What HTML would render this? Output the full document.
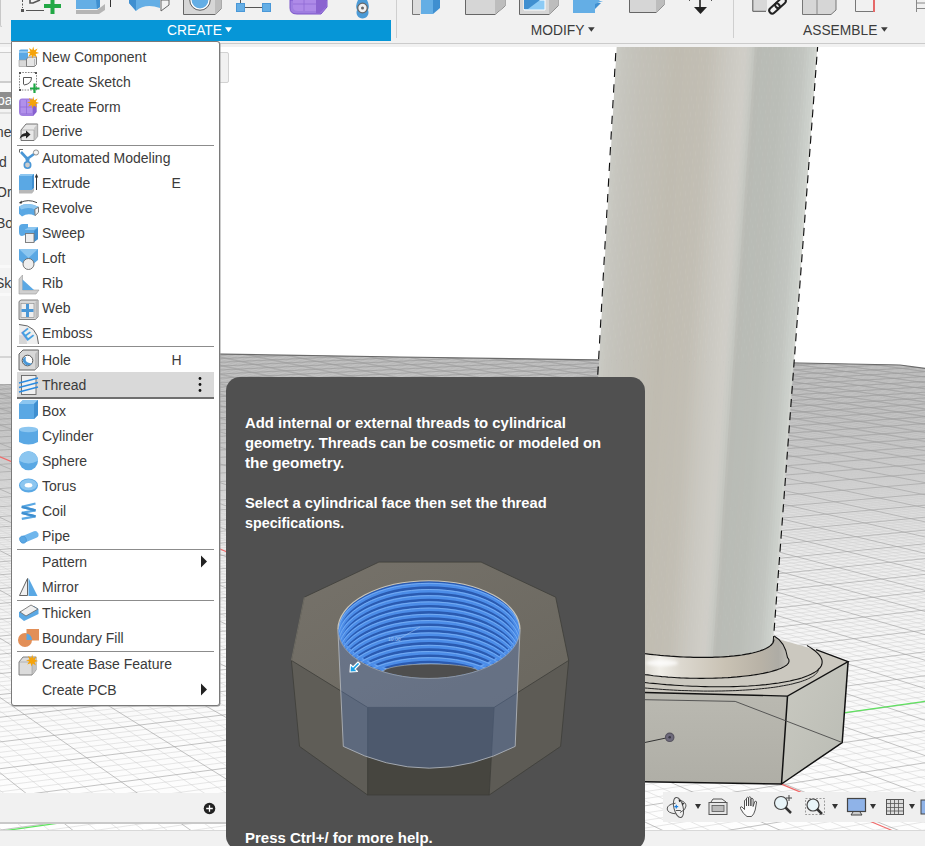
<!DOCTYPE html>
<html><head><meta charset="utf-8">
<style>
*{margin:0;padding:0;box-sizing:border-box}
html,body{width:925px;height:846px;overflow:hidden;background:#fff;font-family:"Liberation Sans",sans-serif}
.abs{position:absolute}
.tlabel{position:absolute;font-size:13.6px;color:#3c3c3c;line-height:16px;white-space:nowrap}
.mi{position:absolute;left:42px;font-size:14px;color:#3b3b3b;line-height:16px;white-space:nowrap}
.sep{position:absolute;left:17px;width:197px;height:1px;background:#8c8c8c}
.tt{position:absolute;left:245px;font-size:14.9px;font-weight:bold;color:#fff;line-height:20px;white-space:nowrap}
</style></head><body>
<svg class="abs" style="left:0;top:0" width="925" height="846" viewBox="0 0 925 846">
 <defs>
  <filter id="blur1" x="-50%" y="-200%" width="200%" height="500%"><feGaussianBlur stdDeviation="1.5"/></filter>
  <clipPath id="gclip"><polygon points="0,350.5 400,357 800,363 900,365 925,368.4 925,846 0,846"/></clipPath>
  <linearGradient id="hz" gradientUnits="userSpaceOnUse" x1="0" y1="350" x2="0" y2="846" gradientTransform="skewY(0.95)">
   <stop offset="0" stop-color="#959595"/>
   <stop offset="0.03" stop-color="#a2a2a2"/>
   <stop offset="0.1" stop-color="#aeaeae"/>
   <stop offset="0.2" stop-color="#c8c8c8"/>
   <stop offset="0.3" stop-color="#dedede"/>
   <stop offset="0.4" stop-color="#ededed"/>
   <stop offset="0.6" stop-color="#f8f8f8"/>
   <stop offset="1" stop-color="#ffffff"/>
  </linearGradient>
  <linearGradient id="filg" gradientUnits="userSpaceOnUse" x1="645" y1="0" x2="790" y2="0">
   <stop offset="0" stop-color="#dcd9d1"/>
   <stop offset="0.1" stop-color="#f0eee8"/>
   <stop offset="0.25" stop-color="#dcd8cf"/>
   <stop offset="0.55" stop-color="#c9c2b4"/>
   <stop offset="0.8" stop-color="#b8b2a6"/>
   <stop offset="0.92" stop-color="#aeaca5"/>
   <stop offset="1" stop-color="#c4c2bb"/>
  </linearGradient>
  <linearGradient id="frontg" x1="0" y1="0" x2="0" y2="1">
   <stop offset="0" stop-color="#bab9b1"/><stop offset="1" stop-color="#afaea6"/>
  </linearGradient>
  <linearGradient id="rightg" x1="0" y1="0" x2="1" y2="1">
   <stop offset="0" stop-color="#c9c9c1"/><stop offset="0.6" stop-color="#c0c1b9"/><stop offset="1" stop-color="#b9bbb4"/>
  </linearGradient>
 </defs>
 <rect x="0" y="0" width="925" height="846" fill="#fff"/>
 <g clip-path="url(#gclip)">
  <rect x="0" y="340" width="925" height="506" fill="url(#hz)"/>
  <path d="M1020.3 240.3L-949.3 291.1M1022.6 240.4L-949.6 291.4M1024.9 240.6L-949.9 291.7M1027.2 240.7L-950.1 292.0M1031.7 240.9L-950.7 292.6M1034.0 241.1L-951.0 292.9M1036.3 241.2L-951.2 293.2M1038.6 241.3L-951.5 293.5M1043.3 241.6L-952.1 294.0M1045.6 241.7L-952.4 294.3M1047.9 241.9L-952.6 294.6M1050.3 242.0L-952.9 294.9M1055.0 242.3L-953.5 295.5M1057.3 242.4L-953.8 295.8M1059.7 242.5L-954.1 296.1M1062.1 242.7L-954.4 296.4M1066.8 242.9L-954.9 297.1M1069.2 243.1L-955.2 297.4M1071.6 243.2L-955.5 297.7M1074.0 243.3L-955.8 298.0M1078.8 243.6L-956.4 298.6M1081.2 243.7L-956.7 298.9M1083.6 243.9L-957.0 299.2M1086.1 244.0L-957.3 299.6M1091.0 244.3L-957.9 300.2M1093.4 244.4L-958.2 300.5M1095.9 244.6L-958.5 300.8M1098.3 244.7L-958.8 301.2M1103.3 245.0L-959.4 301.8M1105.7 245.1L-959.7 302.1M1108.2 245.2L-960.1 302.5M1110.7 245.4L-960.4 302.8M1115.7 245.7L-961.0 303.5M1118.2 245.8L-961.3 303.8M1120.8 246.0L-961.6 304.1M1123.3 246.1L-961.9 304.5M1128.4 246.4L-962.6 305.1M1130.9 246.5L-962.9 305.5M1133.5 246.7L-963.2 305.8M1136.0 246.8L-963.6 306.2M1141.2 247.1L-964.2 306.9M1143.7 247.2L-964.5 307.2M1146.3 247.4L-964.9 307.5M1148.9 247.5L-965.2 307.9M1154.1 247.8L-965.9 308.6M1156.7 248.0L-966.2 309.0M1159.4 248.1L-966.5 309.3M1162.0 248.3L-966.9 309.7M1167.3 248.6L-967.6 310.4M1169.9 248.7L-967.9 310.8M1172.6 248.9L-968.2 311.1M1175.2 249.0L-968.6 311.5M1180.6 249.3L-969.3 312.2M1183.3 249.5L-969.6 312.6M1186.0 249.6L-970.0 313.0M1188.7 249.8L-970.3 313.3M1194.1 250.1L-971.1 314.1M1196.8 250.2L-971.4 314.5M1199.5 250.4L-971.8 314.8M1202.3 250.5L-972.1 315.2M1207.8 250.8L-972.9 316.0M1210.5 251.0L-973.2 316.4M1213.3 251.2L-973.6 316.8M1216.1 251.3L-974.0 317.1M1221.7 251.6L-974.7 317.9M1224.5 251.8L-975.1 318.3M1227.3 251.9L-975.4 318.7M1230.1 252.1L-975.8 319.1M1235.7 252.4L-976.6 319.9M1238.6 252.6L-977.0 320.3M1241.4 252.7L-977.3 320.7M1244.3 252.9L-977.7 321.1M1250.0 253.2L-978.5 321.9M1252.9 253.4L-978.9 322.4M1255.8 253.5L-979.3 322.8M1258.6 253.7L-979.7 323.2M1264.5 254.0L-980.5 324.0M1267.4 254.2L-980.9 324.4M1270.3 254.4L-981.3 324.9M1273.2 254.5L-981.7 325.3M1279.1 254.9L-982.5 326.2M1282.1 255.0L-982.9 326.6M1285.1 255.2L-983.3 327.0M1288.0 255.4L-983.7 327.4M1294.0 255.7L-984.5 328.3M1297.0 255.9L-985.0 328.8M1300.0 256.0L-985.4 329.2M1303.0 256.2L-985.8 329.7M1309.1 256.5L-986.7 330.6M1312.1 256.7L-987.1 331.0M1315.2 256.9L-987.5 331.5M1318.3 257.1L-987.9 331.9M1324.4 257.4L-988.8 332.8M1327.5 257.6L-989.3 333.3M1330.6 257.8L-989.7 333.8M1333.7 257.9L-990.1 334.2M1340.0 258.3L-991.0 335.2M1343.1 258.5L-991.5 335.6M1346.2 258.6L-991.9 336.1M1349.4 258.8L-992.4 336.6M1355.7 259.2L-993.3 337.6M1358.9 259.3L-993.7 338.0M1362.1 259.5L-994.2 338.5M1365.3 259.7L-994.7 339.0M1371.7 260.1L-995.6 340.0M1374.9 260.3L-996.1 340.5M1378.2 260.4L-996.5 341.0M1381.4 260.6L-997.0 341.5M1388.0 261.0L-998.0 342.5M1391.2 261.2L-998.5 343.0M1394.5 261.4L-998.9 343.5M1397.8 261.5L-999.4 344.0M1404.4 261.9L-1000.4 345.1M1407.8 262.1L-1000.9 345.6M1411.1 262.3L-1001.4 346.1M1414.5 262.5L-1001.9 346.7M1421.2 262.9L-1002.9 347.7M1424.6 263.0L-1003.4 348.2M1427.9 263.2L-1003.9 348.8M1431.3 263.4L-1004.4 349.3M1438.2 263.8L-1005.5 350.4M1441.6 264.0L-1006.0 351.0M1445.0 264.2L-1006.5 351.5M1448.5 264.4L-1007.0 352.1M1455.4 264.8L-1008.1 353.2M1458.9 265.0L-1008.6 353.8M1462.4 265.2L-1009.2 354.3M1465.9 265.4L-1009.7 354.9M1472.9 265.8L-1010.8 356.0M1476.5 266.0L-1011.3 356.6M1480.0 266.2L-1011.9 357.2M1483.6 266.4L-1012.5 357.8M1490.7 266.8L-1013.6 359.0M1494.3 267.0L-1014.1 359.6M1497.9 267.2L-1014.7 360.2M1501.5 267.4L-1015.3 360.8M1508.8 267.8L-1016.4 362.0M1512.4 268.0L-1017.0 362.6M1516.1 268.2L-1017.6 363.2M1519.8 268.4L-1018.2 363.8M1527.1 268.8L-1019.3 365.1M1530.9 269.0L-1019.9 365.7M1534.6 269.2L-1020.5 366.3M1538.3 269.4L-1021.1 367.0M1545.8 269.9L-1022.3 368.2M1549.6 270.1L-1023.0 368.9M1553.3 270.3L-1023.6 369.5M1557.1 270.5L-1024.2 370.2M1564.8 270.9L-1025.4 371.5M1568.6 271.1L-1026.1 372.2M1572.4 271.4L-1026.7 372.8M1576.3 271.6L-1027.3 373.5M1584.0 272.0L-1028.6 374.9M1587.9 272.2L-1029.3 375.5M1591.8 272.4L-1029.9 376.2M1595.7 272.7L-1030.6 376.9M1603.6 273.1L-1031.9 378.3M1607.5 273.3L-1032.6 379.0M1611.5 273.6L-1033.2 379.7M1615.5 273.8L-1033.9 380.4M1623.5 274.2L-1035.3 381.9M1627.5 274.5L-1035.9 382.6M1631.5 274.7L-1036.6 383.3M1635.6 274.9L-1037.3 384.0M1643.7 275.4L-1038.7 385.5M1647.8 275.6L-1039.4 386.3M1651.9 275.8L-1040.1 387.0M1656.0 276.1L-1040.9 387.8M1664.3 276.5L-1042.3 389.3M1668.4 276.8L-1043.0 390.1M1672.6 277.0L-1043.8 390.8M1676.8 277.2L-1044.5 391.6M1685.2 277.7L-1046.0 393.2M1689.4 277.9L-1046.7 394.0M1693.7 278.2L-1047.5 394.8M1697.9 278.4L-1048.3 395.6M1706.5 278.9L-1049.8 397.2M1710.8 279.1L-1050.6 398.0M1715.1 279.4L-1051.3 398.8M1719.4 279.6L-1052.1 399.7M1728.1 280.1L-1053.7 401.3M1732.5 280.4L-1054.5 402.2M1736.9 280.6L-1055.3 403.0M1741.3 280.9L-1056.1 403.9M1750.2 281.4L-1057.8 405.6M1754.6 281.6L-1058.6 406.5M1759.1 281.9L-1059.4 407.4M1763.6 282.1L-1060.3 408.3M1772.6 282.6L-1061.9 410.0M1777.1 282.9L-1062.8 410.9M1781.6 283.1L-1063.7 411.9M1786.2 283.4L-1064.5 412.8M1795.4 283.9L-1066.3 414.6M1800.0 284.2L-1067.2 415.5M1804.6 284.4L-1068.0 416.5M1809.2 284.7L-1068.9 417.4M1818.6 285.2L-1070.7 419.3M1823.3 285.5L-1071.7 420.3M1828.0 285.7L-1072.6 421.3M1832.7 286.0L-1073.5 422.2M1842.2 286.5L-1075.4 424.2M1847.0 286.8L-1076.3 425.2M1851.8 287.1L-1077.3 426.2M1856.6 287.3L-1078.2 427.2M1866.3 287.9L-1080.2 429.3M1871.1 288.2L-1081.1 430.3M1876.0 288.4L-1082.1 431.3M1880.9 288.7L-1083.1 432.4M1890.8 289.3L-1085.1 434.5M1895.7 289.5L-1086.1 435.6M1900.7 289.8L-1087.2 436.7M1905.7 290.1L-1088.2 437.7M1915.7 290.7L-1090.3 439.9M1920.8 290.9L-1091.3 441.1M1925.8 291.2L-1092.4 442.2M1930.9 291.5L-1093.4 443.3M1941.2 292.1L-1095.6 445.6M1946.3 292.4L-1096.7 446.7M1951.5 292.7L-1097.8 447.9M1956.6 293.0L-1098.9 449.1M1967.1 293.6L-1101.1 451.4M1972.3 293.8L-1102.3 452.6M1977.5 294.1L-1103.4 453.8M1982.8 294.4L-1104.6 455.0M1993.4 295.0L-1106.9 457.5M1998.8 295.3L-1108.1 458.7M2004.1 295.6L-1109.3 460.0M2009.5 295.9L-1110.4 461.3M2020.3 296.5L-1112.9 463.8M2025.8 296.9L-1114.1 465.1M2031.3 297.2L-1115.3 466.4M2036.7 297.5L-1116.6 467.7M2047.8 298.1L-1119.1 470.4M2053.3 298.4L-1120.4 471.7M2058.9 298.7L-1121.6 473.1M2064.5 299.0L-1122.9 474.4M2075.7 299.7L-1125.6 477.2M2081.4 300.0L-1126.9 478.6M2087.1 300.3L-1128.2 480.0M2092.8 300.6L-1129.6 481.5M2104.3 301.3L-1132.3 484.3M2110.0 301.6L-1133.7 485.8M2115.8 301.9L-1135.1 487.3M2121.6 302.2L-1136.5 488.8M2133.3 302.9L-1139.4 491.8M2139.2 303.2L-1140.8 493.3M2145.1 303.6L-1142.3 494.8M2151.1 303.9L-1143.7 496.4M2163.0 304.6L-1146.7 499.5M2169.0 304.9L-1148.2 501.1M2175.1 305.3L-1149.7 502.7M2181.1 305.6L-1151.3 504.3M2193.3 306.3L-1154.4 507.6M2199.4 306.6L-1156.0 509.3M2205.6 307.0L-1157.5 511.0M2211.8 307.3L-1159.1 512.7M2224.2 308.0L-1162.4 516.1M2230.5 308.4L-1164.1 517.8M2236.7 308.7L-1165.7 519.6M2243.1 309.1L-1167.4 521.4M2255.7 309.8L-1170.8 525.0M2262.1 310.1L-1172.5 526.8M2268.6 310.5L-1174.3 528.6M2275.0 310.9L-1176.0 530.5M2288.0 311.6L-1179.6 534.3M2294.5 312.0L-1181.4 536.2M2301.0 312.3L-1183.3 538.1M2307.6 312.7L-1185.1 540.1M2320.9 313.5L-1188.8 544.0M2327.5 313.8L-1190.8 546.0M2334.2 314.2L-1192.7 548.1M2340.9 314.6L-1194.6 550.1M2354.5 315.3L-1198.6 554.3M2361.3 315.7L-1200.6 556.4M2368.1 316.1L-1202.6 558.5M2375.0 316.5L-1204.6 560.7M2388.8 317.3L-1208.8 565.1M2395.8 317.7L-1210.9 567.3M2402.7 318.1L-1213.0 569.5M2409.8 318.5L-1215.1 571.8M2423.9 319.2L-1219.5 576.4M2431.0 319.6L-1221.7 578.8M2438.1 320.0L-1224.0 581.1M2445.3 320.5L-1226.2 583.5M2459.8 321.3L-1230.9 588.4M2467.0 321.7L-1233.2 590.9M2474.3 322.1L-1235.6 593.4M2481.7 322.5L-1238.0 595.9M2496.4 323.3L-1242.8 601.0M2503.9 323.7L-1245.3 603.6M2511.3 324.2L-1247.8 606.3M2518.9 324.6L-1250.3 609.0M2534.0 325.4L-1255.5 614.4M2541.6 325.9L-1258.1 617.2M2549.2 326.3L-1260.8 620.0M2556.9 326.7L-1263.4 622.8M2572.3 327.6L-1268.9 628.6M2580.1 328.0L-1271.7 631.5M2587.9 328.5L-1274.5 634.5M2595.8 328.9L-1277.3 637.5M2611.6 329.8L-1283.1 643.6M2619.6 330.3L-1286.1 646.7M2627.6 330.7L-1289.1 649.9M2635.6 331.2L-1292.1 653.1M2651.8 332.1L-1298.3 659.6M2659.9 332.5L-1301.4 662.9M2668.1 333.0L-1304.6 666.3M2676.4 333.4L-1307.8 669.7M2692.9 334.4L-1314.4 676.6M2701.3 334.8L-1317.8 680.1M2709.7 335.3L-1321.2 683.7M2718.1 335.8L-1324.6 687.4M2735.1 336.7L-1331.6 694.8M2743.6 337.2L-1335.2 698.6M2752.2 337.7L-1338.8 702.4M2760.9 338.2L-1342.5 706.3M2778.2 339.2L-1350.0 714.2M2787.0 339.7L-1353.9 718.3M2795.8 340.2L-1357.8 722.4M2804.7 340.7L-1361.7 726.5M2822.5 341.7L-1369.8 735.1M2831.5 342.2L-1373.9 739.4M2840.5 342.7L-1378.1 743.8M2849.5 343.2L-1382.3 748.3M2867.8 344.2L-1391.0 757.5M2877.0 344.7L-1395.5 762.2M2886.3 345.3L-1400.0 766.9M2895.6 345.8L-1404.5 771.8M2914.3 346.8L-1413.9 781.6M2923.7 347.4L-1418.7 786.7M2933.2 347.9L-1423.6 791.8M2942.8 348.4L-1428.5 797.1M2962.0 349.5L-1438.6 807.8M2971.7 350.1L-1443.8 813.2M2981.4 350.6L-1449.1 818.8M2991.2 351.2L-1454.5 824.5M3010.9 352.3L-1465.5 836.1M3020.8 352.8L-1471.1 842.1M3030.8 353.4L-1476.9 848.1M3040.9 353.9L-1482.7 854.3M3061.1 355.1L-1494.7 866.9M3071.3 355.7L-1500.8 873.4M3081.6 356.2L-1507.1 880.0M3091.9 356.8L-1513.5 886.8M3112.7 358.0L-1526.6 900.6M3123.1 358.6L-1533.3 907.7M3133.7 359.2L-1540.2 915.0M3144.2 359.8L-1547.2 922.4M3165.6 361.0L-1561.6 937.6M3176.4 361.6L-1569.0 945.4M3187.2 362.2L-1576.5 953.3M3198.0 362.8L-1584.2 961.5M3220.0 364.0L-1600.1 978.3M3231.0 364.6L-1608.3 986.9M3242.2 365.3L-1616.7 995.7M3253.3 365.9L-1625.2 1004.7M3275.9 367.2L-1642.8 1023.3M3287.3 367.8L-1651.9 1032.9M3298.7 368.4L-1661.2 1042.7M3310.2 369.1L-1670.7 1052.8M3333.4 370.4L-1690.3 1073.5M3345.0 371.1L-1700.5 1084.2M3356.8 371.7L-1710.9 1095.2M3368.6 372.4L-1721.5 1106.4M3392.5 373.7L-1743.5 1129.7M3404.5 374.4L-1755.0 1141.8M3416.6 375.1L-1766.7 1154.1M3428.8 375.8L-1778.7 1166.8M3453.3 377.1L-1803.6 1193.1M3465.7 377.8L-1816.5 1206.7M3478.1 378.5L-1829.8 1220.8M3490.7 379.2L-1843.4 1235.1M3515.9 380.7L-1871.8 1265.1M3528.7 381.4L-1886.6 1280.7M3541.5 382.1L-1901.8 1296.8M3554.4 382.8L-1917.4 1313.2M3580.4 384.3L-1950.0 1347.7M3593.6 385.0L-1967.1 1365.7M3606.8 385.8L-1984.6 1384.2M3620.1 386.5L-2002.7 1403.3M3646.9 388.0L-2040.6 1443.3M3660.4 388.8L-2060.5 1464.3M3674.0 389.6L-2081.0 1486.0M3687.7 390.3L-2102.2 1508.3M3715.4 391.9L-2146.7 1555.4M3729.3 392.7L-2170.2 1580.2M3743.4 393.5L-2194.5 1605.8M3757.5 394.3L-2219.6 1632.4M3786.0 395.9L-2272.8 1688.5M3800.4 396.7L-2300.9 1718.2M3814.9 397.5L-2330.1 1749.0M3829.4 398.3L-2360.5 1781.1M3858.9 400.0L-2425.0 1849.2M3873.7 400.8L-2459.3 1885.4M3888.7 401.6L-2495.1 1923.2M3903.7 402.5L-2532.5 1962.6M3934.1 404.2L-2612.4 2047.0M3949.4 405.0L-2655.2 2092.2M3964.9 405.9L-2700.0 2139.6M3980.4 406.8L-2747.1 2189.3M4011.8 408.6L-2848.7 2296.6M4027.6 409.4L-2903.6 2354.5M4043.6 410.3L-2961.5 2415.6M4059.6 411.2L-3022.7 2480.3M4092.1 413.1L-3156.1 2621.1M4108.4 414.0L-3229.1 2698.1M4124.9 414.9L-3306.6 2780.0M4141.5 415.9L-3389.4 2867.4M1015.7 240.2L4156.9 417.2M1013.3 240.3L4155.5 417.7M1010.9 240.4L4154.1 418.2M1008.5 240.4L4152.7 418.6M1003.7 240.5L4149.9 419.6M1001.2 240.6L4148.5 420.0M998.8 240.7L4147.1 420.5M996.4 240.7L4145.7 421.0M991.6 240.9L4142.9 421.9M989.1 240.9L4141.4 422.4M986.7 241.0L4140.0 422.9M984.3 241.0L4138.6 423.3M979.4 241.2L4135.7 424.3M977.0 241.2L4134.2 424.8M974.5 241.3L4132.8 425.3M972.1 241.4L4131.3 425.8M967.2 241.5L4128.4 426.7M964.7 241.6L4126.9 427.2M962.2 241.6L4125.4 427.7M959.8 241.7L4124.0 428.2M954.9 241.8L4121.0 429.2M952.4 241.9L4119.5 429.7M949.9 241.9L4118.0 430.2M947.4 242.0L4116.5 430.7M942.5 242.1L4113.4 431.7M940.0 242.2L4111.9 432.2M937.5 242.3L4110.4 432.7M935.0 242.3L4108.8 433.3M930.0 242.4L4105.7 434.3M927.5 242.5L4104.2 434.8M925.0 242.6L4102.6 435.3M922.5 242.6L4101.1 435.8M917.5 242.8L4097.9 436.9M914.9 242.8L4096.3 437.4M912.4 242.9L4094.8 437.9M909.9 243.0L4093.2 438.5M904.8 243.1L4090.0 439.5M902.3 243.2L4088.4 440.1M899.8 243.2L4086.7 440.6M897.2 243.3L4085.1 441.2M892.2 243.4L4081.9 442.2M889.6 243.5L4080.2 442.8M887.1 243.6L4078.6 443.3M884.5 243.6L4076.9 443.9M879.4 243.8L4073.6 445.0M876.8 243.8L4072.0 445.5M874.2 243.9L4070.3 446.1M871.7 243.9L4068.6 446.7M866.5 244.1L4065.2 447.8M863.9 244.1L4063.5 448.3M861.4 244.2L4061.8 448.9M858.8 244.3L4060.1 449.5M853.6 244.4L4056.7 450.6M851.0 244.5L4054.9 451.2M848.4 244.5L4053.2 451.8M845.8 244.6L4051.5 452.4M840.6 244.8L4048.0 453.5M838.0 244.8L4046.2 454.1M835.3 244.9L4044.4 454.7M832.7 245.0L4042.7 455.3M827.5 245.1L4039.1 456.5M824.8 245.2L4037.3 457.1M822.2 245.2L4035.5 457.7M819.6 245.3L4033.7 458.3M814.3 245.4L4030.1 459.5M811.6 245.5L4028.2 460.1M809.0 245.6L4026.4 460.7M806.3 245.6L4024.6 461.3M801.0 245.8L4020.8 462.6M798.4 245.8L4019.0 463.2M795.7 245.9L4017.1 463.8M793.0 246.0L4015.2 464.4M787.7 246.1L4011.5 465.7M785.0 246.2L4009.6 466.3M782.3 246.3L4007.7 467.0M779.6 246.3L4005.7 467.6M774.2 246.5L4001.9 468.9M771.5 246.5L4000.0 469.5M768.8 246.6L3998.0 470.2M766.1 246.7L3996.1 470.8M760.7 246.8L3992.1 472.1M758.0 246.9L3990.2 472.8M755.3 246.9L3988.2 473.5M752.6 247.0L3986.2 474.1M747.1 247.2L3982.2 475.4M744.4 247.2L3980.2 476.1M741.6 247.3L3978.1 476.8M738.9 247.4L3976.1 477.5M733.4 247.5L3972.0 478.8M730.7 247.6L3970.0 479.5M727.9 247.7L3967.9 480.2M725.2 247.7L3965.8 480.9M719.6 247.9L3961.7 482.3M716.9 247.9L3959.6 483.0M714.1 248.0L3957.5 483.7M711.3 248.1L3955.4 484.4M705.8 248.2L3951.1 485.8M703.0 248.3L3949.0 486.5M700.2 248.4L3946.8 487.2M697.4 248.4L3944.7 488.0M691.8 248.6L3940.3 489.4M689.0 248.7L3938.1 490.1M686.2 248.7L3935.9 490.9M683.4 248.8L3933.7 491.6M677.7 248.9L3929.3 493.1M674.9 249.0L3927.1 493.8M672.1 249.1L3924.8 494.6M669.3 249.2L3922.6 495.3M663.6 249.3L3918.1 496.8M660.8 249.4L3915.8 497.6M657.9 249.5L3913.5 498.3M655.1 249.5L3911.2 499.1M649.4 249.7L3906.6 500.6M646.5 249.8L3904.2 501.4M643.6 249.8L3901.9 502.2M640.8 249.9L3899.6 503.0M635.0 250.0L3894.8 504.5M632.1 250.1L3892.5 505.3M629.3 250.2L3890.1 506.1M626.4 250.3L3887.7 506.9M620.6 250.4L3882.9 508.5M617.7 250.5L3880.4 509.3M614.8 250.6L3878.0 510.2M611.9 250.6L3875.5 511.0M606.1 250.8L3870.6 512.6M603.2 250.9L3868.1 513.4M600.2 250.9L3865.6 514.3M597.3 251.0L3863.1 515.1M591.4 251.2L3858.1 516.8M588.5 251.2L3855.5 517.6M585.6 251.3L3853.0 518.5M582.6 251.4L3850.4 519.3M576.7 251.5L3845.3 521.1M573.8 251.6L3842.7 521.9M570.8 251.7L3840.1 522.8M567.8 251.8L3837.5 523.7M561.9 251.9L3832.2 525.4M558.9 252.0L3829.5 526.3M556.0 252.1L3826.9 527.2M553.0 252.2L3824.2 528.1M547.0 252.3L3818.8 529.9M544.0 252.4L3816.1 530.8M541.0 252.5L3813.3 531.7M538.0 252.5L3810.6 532.6M532.0 252.7L3805.1 534.4M529.0 252.8L3802.3 535.4M525.9 252.9L3799.5 536.3M522.9 252.9L3796.7 537.2M516.9 253.1L3791.0 539.1M513.8 253.2L3788.2 540.1M510.8 253.2L3785.3 541.0M507.7 253.3L3782.5 542.0M501.6 253.5L3776.7 543.9M498.6 253.6L3773.8 544.9M495.5 253.6L3770.8 545.9M492.4 253.7L3767.9 546.8M486.3 253.9L3762.0 548.8M483.2 254.0L3759.0 549.8M480.1 254.0L3756.0 550.8M477.1 254.1L3753.0 551.8M470.9 254.3L3746.9 553.8M467.8 254.4L3743.8 554.9M464.7 254.4L3740.8 555.9M461.6 254.5L3737.7 556.9M455.3 254.7L3731.4 559.0M452.2 254.8L3728.3 560.0M449.1 254.8L3725.2 561.1M446.0 254.9L3722.0 562.1M439.7 255.1L3715.6 564.3M436.5 255.2L3712.4 565.3M433.4 255.2L3709.2 566.4M430.3 255.3L3705.9 567.5M423.9 255.5L3699.4 569.7M420.8 255.6L3696.1 570.8M417.6 255.6L3692.8 571.9M414.4 255.7L3689.4 573.0M408.1 255.9L3682.7 575.2M404.9 256.0L3679.3 576.3M401.7 256.1L3675.9 577.5M398.5 256.1L3672.5 578.6M392.1 256.3L3665.6 580.9M388.9 256.4L3662.2 582.1M385.7 256.5L3658.7 583.2M382.5 256.6L3655.2 584.4M376.0 256.7L3648.1 586.7M372.8 256.8L3644.5 587.9M369.6 256.9L3641.0 589.1M366.3 257.0L3637.4 590.3M359.8 257.1L3630.1 592.7M356.6 257.2L3626.4 594.0M353.3 257.3L3622.8 595.2M350.1 257.4L3619.1 596.4M343.5 257.6L3611.6 598.9M340.2 257.6L3607.8 600.2M337.0 257.7L3604.1 601.4M333.7 257.8L3600.3 602.7M327.1 258.0L3592.6 605.2M323.8 258.1L3588.7 606.5M320.5 258.1L3584.9 607.8M317.2 258.2L3581.0 609.1M310.5 258.4L3573.1 611.7M307.2 258.5L3569.1 613.1M303.9 258.6L3565.1 614.4M300.6 258.7L3561.1 615.7M293.9 258.8L3553.0 618.4M290.5 258.9L3548.9 619.8M287.2 259.0L3544.8 621.2M283.8 259.1L3540.7 622.5M277.1 259.3L3532.4 625.3M273.7 259.4L3528.1 626.7M270.4 259.4L3523.9 628.1M267.0 259.5L3519.7 629.5M260.2 259.7L3511.1 632.4M256.8 259.8L3506.8 633.8M253.4 259.9L3502.4 635.3M250.0 260.0L3498.0 636.7M243.2 260.1L3489.2 639.7M239.8 260.2L3484.8 641.2M236.3 260.3L3480.3 642.7M232.9 260.4L3475.8 644.2M226.0 260.6L3466.7 647.2M222.6 260.7L3462.1 648.7M219.2 260.8L3457.5 650.2M215.7 260.8L3452.8 651.8M208.8 261.0L3443.5 654.9M205.3 261.1L3438.7 656.5M201.8 261.2L3434.0 658.1M198.4 261.3L3429.2 659.7M191.4 261.5L3419.5 662.9M187.9 261.6L3414.7 664.5M184.4 261.7L3409.8 666.1M180.9 261.7L3404.8 667.8M173.9 261.9L3394.9 671.1M170.3 262.0L3389.8 672.8M166.8 262.1L3384.8 674.5M163.3 262.2L3379.7 676.2M156.2 262.4L3369.4 679.6M152.7 262.5L3364.2 681.3M149.1 262.6L3359.0 683.1M145.6 262.7L3353.7 684.8M138.4 262.8L3343.1 688.4M134.9 262.9L3337.7 690.1M131.3 263.0L3332.3 691.9M127.7 263.1L3326.9 693.8M120.5 263.3L3315.9 697.4M116.9 263.4L3310.4 699.2M113.3 263.5L3304.8 701.1M109.7 263.6L3299.2 703.0M102.5 263.8L3287.9 706.8M98.9 263.9L3282.1 708.7M95.2 264.0L3276.4 710.6M91.6 264.0L3270.6 712.5M84.3 264.2L3258.9 716.4M80.7 264.3L3252.9 718.4M77.0 264.4L3247.0 720.4M73.3 264.5L3241.0 722.4M66.0 264.7L3228.8 726.4M62.3 264.8L3222.7 728.5M58.6 264.9L3216.5 730.5M55.0 265.0L3210.3 732.6M47.6 265.2L3197.8 736.8M43.9 265.3L3191.4 738.9M40.1 265.4L3185.0 741.0M36.4 265.5L3178.6 743.2M29.0 265.7L3165.6 747.5M25.2 265.8L3159.0 749.7M21.5 265.9L3152.4 751.9M17.8 265.9L3145.7 754.1M10.2 266.1L3132.2 758.6M6.5 266.2L3125.4 760.9M2.7 266.3L3118.5 763.2M-1.1 266.4L3111.6 765.5M-8.6 266.6L3097.6 770.1M-12.4 266.7L3090.5 772.5M-16.2 266.8L3083.4 774.9M-20.0 266.9L3076.2 777.3M-27.6 267.1L3061.7 782.1M-31.5 267.2L3054.4 784.5M-35.3 267.3L3047.0 787.0M-39.1 267.4L3039.5 789.5M-46.8 267.6L3024.4 794.5M-50.6 267.7L3016.8 797.1M-54.5 267.8L3009.1 799.6M-58.4 267.9L3001.3 802.2M-66.1 268.1L2985.7 807.4M-70.0 268.2L2977.7 810.1M-73.9 268.3L2969.7 812.7M-77.7 268.4L2961.7 815.4M-85.5 268.6L2945.3 820.9M-89.5 268.7L2937.1 823.6M-93.4 268.8L2928.8 826.4M-97.3 268.9L2920.4 829.2M-105.1 269.1L2903.4 834.8M-109.1 269.2L2894.8 837.7M-113.0 269.3L2886.1 840.6M-117.0 269.4L2877.4 843.5M-124.9 269.6L2859.7 849.4M-128.9 269.7L2850.7 852.4M-132.8 269.8L2841.7 855.4M-136.8 269.9L2832.5 858.4M-144.8 270.1L2814.1 864.6M-148.8 270.2L2804.7 867.7M-152.8 270.3L2795.3 870.9M-156.8 270.4L2785.8 874.0M-164.9 270.7L2766.5 880.4M-168.9 270.8L2756.7 883.7M-172.9 270.9L2746.9 887.0M-177.0 271.0L2737.0 890.3M-185.1 271.2L2716.8 897.0M-189.2 271.3L2706.6 900.4M-193.2 271.4L2696.3 903.8M-197.3 271.5L2685.9 907.3M-205.5 271.7L2664.9 914.3M-209.6 271.8L2654.2 917.9M-213.7 271.9L2643.4 921.4M-217.8 272.0L2632.5 925.1M-226.0 272.2L2610.5 932.4M-230.1 272.3L2599.3 936.1M-234.3 272.4L2588.0 939.9M-238.4 272.5L2576.6 943.7M-246.7 272.8L2553.5 951.4M-250.9 272.9L2541.8 955.3M-255.0 273.0L2530.0 959.2M-259.2 273.1L2518.0 963.2M-267.6 273.3L2493.7 971.3M-271.8 273.4L2481.4 975.4M-276.0 273.5L2469.0 979.6M-280.2 273.6L2456.5 983.7M-288.6 273.8L2431.0 992.2M-292.8 273.9L2418.1 996.5M-297.1 274.1L2405.0 1000.9M-301.3 274.2L2391.8 1005.3M-309.8 274.4L2365.0 1014.2M-314.1 274.5L2351.4 1018.7M-318.3 274.6L2337.6 1023.3M-322.6 274.7L2323.7 1027.9M-331.2 274.9L2295.5 1037.4M-335.5 275.0L2281.2 1042.1M-339.8 275.2L2266.7 1047.0M-344.1 275.3L2252.0 1051.8M-352.7 275.5L2222.3 1061.8M-357.1 275.6L2207.1 1066.8M-361.4 275.7L2191.8 1071.9M-365.7 275.8L2176.4 1077.0M-374.5 276.1L2144.9 1087.5M-378.8 276.2L2128.9 1092.8M-383.2 276.3L2112.8 1098.2M-387.6 276.4L2096.4 1103.7M-396.4 276.6L2063.2 1114.8M-400.8 276.7L2046.2 1120.4M-405.2 276.8L2029.1 1126.1M-409.6 277.0L2011.8 1131.9M-418.4 277.2L1976.6 1143.6M-422.9 277.3L1958.6 1149.6M-427.3 277.4L1940.5 1155.6M-431.8 277.5L1922.1 1161.7M-440.7 277.8L1884.7 1174.2M-445.2 277.9L1865.7 1180.6M-449.6 278.0L1846.4 1187.0M-454.1 278.1L1826.9 1193.5M-463.1 278.3L1787.1 1206.7M-467.6 278.5L1766.8 1213.5M-472.2 278.6L1746.3 1220.3M-476.7 278.7L1725.5 1227.2M-485.8 278.9L1683.1 1241.4M-490.3 279.0L1661.5 1248.6M-494.9 279.2L1639.6 1255.9M-499.4 279.3L1617.5 1263.2M-508.6 279.5L1572.2 1278.3M-513.2 279.6L1549.1 1286.0M-517.8 279.7L1525.7 1293.8M-522.4 279.9L1502.0 1301.7M-531.6 280.1L1453.6 1317.8M-536.2 280.2L1428.9 1326.1M-540.8 280.3L1403.8 1334.4M-545.5 280.5L1378.4 1342.9M-554.8 280.7L1326.5 1360.2M-559.5 280.8L1300.0 1369.0M-564.1 280.9L1273.1 1378.0M-568.8 281.1L1245.7 1387.1M-578.2 281.3L1189.9 1405.7M-582.9 281.4L1161.4 1415.2M-587.6 281.5L1132.4 1424.8M-592.3 281.7L1103.0 1434.6M-601.8 281.9L1042.8 1454.7M-606.5 282.0L1012.0 1465.0M-611.3 282.2L980.7 1475.4M-616.0 282.3L948.9 1486.0M-625.6 282.5L883.8 1507.7M-630.4 282.6L850.5 1518.8M-635.2 282.8L816.6 1530.0M-640.0 282.9L782.1 1541.5M-649.6 283.1L711.5 1565.0M-654.4 283.3L675.3 1577.1M-659.2 283.4L638.5 1589.4M-664.1 283.5L601.0 1601.9M-673.8 283.8L524.2 1627.5M-678.6 283.9L484.7 1640.6M-683.5 284.0L444.6 1654.0M-688.4 284.1L403.7 1667.6M-698.2 284.4L319.7 1695.6M-703.1 284.5L276.5 1710.0M-708.0 284.6L232.6 1724.6M-712.9 284.8L187.8 1739.5M-722.8 285.0L95.6 1770.2M-727.8 285.2L48.2 1786.0M-732.7 285.3L-0.2 1802.1M-737.7 285.4L-49.5 1818.6M-747.7 285.7L-151.0 1852.4M-752.6 285.8L-203.4 1869.8M-757.7 285.9L-256.8 1887.6M-762.7 286.1L-311.3 1905.8M-772.7 286.3L-423.8 1943.3M-777.7 286.4L-481.9 1962.6M-782.8 286.6L-541.2 1982.4M-787.8 286.7L-601.8 2002.6M-798.0 287.0L-727.2 2044.3M-803.1 287.1L-791.9 2065.9M-808.2 287.2L-858.2 2088.0M-813.3 287.4L-926.0 2110.6M-823.5 287.6L-1066.4 2157.4M-828.6 287.8L-1139.2 2181.6M-833.7 287.9L-1213.7 2206.4M-838.9 288.0L-1290.0 2231.9M-849.2 288.3L-1448.5 2284.6M-854.4 288.4L-1530.8 2312.1M-859.6 288.5L-1615.2 2340.2M-864.7 288.7L-1701.8 2369.0M-875.2 289.0L-1881.9 2429.0M-880.4 289.1L-1975.7 2460.3M-885.6 289.2L-2072.1 2492.4M-890.8 289.4L-2171.2 2525.4M-901.3 289.6L-2377.9 2594.3M-906.6 289.8L-2485.8 2630.2M-911.9 289.9L-2596.9 2667.2M-917.2 290.0L-2711.3 2705.4M-927.8 290.3L-2950.9 2785.2M-933.1 290.4L-3076.4 2827.0M-938.4 290.6L-3205.9 2870.1M-943.7 290.7L-3339.6 2914.7" stroke="#cfcfcf" stroke-width="0.7" stroke-opacity="0.7" fill="none"/>
<path d="M1018.1 240.2L-949.1 290.9M1029.4 240.8L-950.4 292.3M1041.0 241.5L-951.8 293.7M1052.6 242.1L-953.2 295.2M1064.4 242.8L-954.6 296.8M1076.4 243.5L-956.1 298.3M1088.5 244.1L-957.6 299.9M1100.8 244.8L-959.1 301.5M1113.2 245.5L-960.7 303.1M1125.8 246.2L-962.3 304.8M1138.6 247.0L-963.9 306.5M1151.5 247.7L-965.5 308.2M1164.6 248.4L-967.2 310.0M1177.9 249.2L-968.9 311.8M1191.4 249.9L-970.7 313.7M1205.0 250.7L-972.5 315.6M1218.9 251.5L-974.3 317.5M1232.9 252.3L-976.2 319.5M1247.1 253.1L-978.1 321.5M1261.5 253.9L-980.1 323.6M1276.2 254.7L-982.1 325.7M1291.0 255.5L-984.1 327.9M1306.1 256.4L-986.2 330.1M1321.3 257.2L-988.4 332.4M1336.8 258.1L-990.6 334.7M1352.5 259.0L-992.8 337.1M1368.5 259.9L-995.1 339.5M1384.7 260.8L-997.5 342.0M1401.1 261.7L-999.9 344.6M1417.8 262.7L-1002.4 347.2M1434.7 263.6L-1005.0 349.9M1451.9 264.6L-1007.6 352.6M1469.4 265.6L-1010.3 355.5M1487.1 266.6L-1013.0 358.4M1505.2 267.6L-1015.8 361.4M1523.5 268.6L-1018.7 364.4M1542.0 269.6L-1021.7 367.6M1560.9 270.7L-1024.8 370.8M1580.1 271.8L-1028.0 374.2M1599.6 272.9L-1031.2 377.6M1619.5 274.0L-1034.6 381.1M1639.6 275.1L-1038.0 384.8M1660.2 276.3L-1041.6 388.5M1681.0 277.5L-1045.2 392.4M1702.2 278.7L-1049.0 396.4M1723.8 279.9L-1052.9 400.5M1745.7 281.1L-1056.9 404.8M1768.1 282.4L-1061.1 409.1M1790.8 283.6L-1065.4 413.7M1813.9 284.9L-1069.8 418.4M1837.5 286.3L-1074.4 423.2M1861.4 287.6L-1079.2 428.2M1885.8 289.0L-1084.1 433.4M1910.7 290.4L-1089.2 438.8M1936.0 291.8L-1094.5 444.4M1961.8 293.3L-1100.0 450.2M1988.1 294.7L-1105.7 456.3M2014.9 296.2L-1111.7 462.5M2042.2 297.8L-1117.8 469.0M2070.1 299.3L-1124.3 475.8M2098.5 300.9L-1130.9 482.9M2127.5 302.6L-1137.9 490.3M2157.0 304.2L-1145.2 497.9M2187.2 305.9L-1152.8 506.0M2218.0 307.7L-1160.8 514.4M2249.4 309.4L-1169.1 523.2M2281.5 311.2L-1177.8 532.4M2314.2 313.1L-1187.0 542.0M2347.7 315.0L-1196.6 552.2M2381.9 316.9L-1206.7 562.9M2416.8 318.8L-1217.3 574.1M2452.5 320.9L-1228.5 585.9M2489.0 322.9L-1240.4 598.4M2526.4 325.0L-1252.9 611.7M2564.6 327.2L-1266.2 625.7M2603.7 329.4L-1280.2 640.5M2643.7 331.6L-1295.2 656.3M2684.6 333.9L-1311.1 673.1M2726.6 336.3L-1328.1 691.0M2769.5 338.7L-1346.3 710.2M2813.5 341.2L-1365.7 730.8M2858.7 343.7L-1386.6 752.9M2904.9 346.3L-1409.2 776.7M2952.4 349.0L-1433.5 802.4M3001.0 351.7L-1459.9 830.2M3051.0 354.5L-1488.6 860.5M3102.2 357.4L-1520.0 893.6M3154.9 360.4L-1554.3 929.9M3209.0 363.4L-1592.1 969.8M3264.6 366.5L-1633.9 1013.9M3321.7 369.7L-1680.4 1063.0M3380.5 373.0L-1732.4 1117.9M3441.0 376.5L-1791.0 1179.8M3503.3 380.0L-1857.4 1249.9M3567.4 383.6L-1933.5 1330.2M3633.4 387.3L-2021.4 1423.0M3701.5 391.1L-2124.1 1531.5M3771.7 395.1L-2245.7 1659.9M3844.1 399.1L-2392.1 1814.4M3918.9 403.3L-2571.5 2003.9M3996.0 407.7L-2796.6 2241.6M4075.8 412.2L-3087.5 2548.6M4158.3 416.8L-3477.7 2960.7M1018.1 240.2L4158.3 416.8M1006.1 240.5L4151.3 419.1M994.0 240.8L4144.3 421.4M981.8 241.1L4137.1 423.8M969.6 241.4L4129.9 426.2M957.3 241.7L4122.5 428.7M945.0 242.1L4114.9 431.2M932.5 242.4L4107.3 433.8M920.0 242.7L4099.5 436.4M907.4 243.0L4091.6 439.0M894.7 243.4L4083.5 441.7M881.9 243.7L4075.3 444.4M869.1 244.0L4066.9 447.2M856.2 244.3L4058.4 450.1M843.2 244.7L4049.7 452.9M830.1 245.0L4040.9 455.9M816.9 245.4L4031.9 458.9M803.7 245.7L4022.7 461.9M790.4 246.0L4013.4 465.1M776.9 246.4L4003.8 468.2M763.4 246.7L3994.1 471.5M749.8 247.1L3984.2 474.8M736.2 247.4L3974.1 478.1M722.4 247.8L3963.8 481.6M708.5 248.2L3953.2 485.1M694.6 248.5L3942.5 488.7M680.6 248.9L3931.5 492.3M666.4 249.2L3920.3 496.1M652.2 249.6L3908.9 499.9M637.9 250.0L3897.2 503.8M623.5 250.3L3885.3 507.7M609.0 250.7L3873.1 511.8M594.4 251.1L3860.6 515.9M579.7 251.5L3847.9 520.2M564.9 251.9L3834.8 524.5M550.0 252.2L3821.5 529.0M535.0 252.6L3807.8 533.5M519.9 253.0L3793.9 538.2M504.7 253.4L3779.6 542.9M489.4 253.8L3764.9 547.8M474.0 254.2L3749.9 552.8M458.5 254.6L3734.6 557.9M442.8 255.0L3718.8 563.2M427.1 255.4L3702.7 568.6M411.3 255.8L3686.1 574.1M395.3 256.2L3669.1 579.8M379.2 256.6L3651.6 585.6M363.1 257.1L3633.7 591.5M346.8 257.5L3615.3 597.7M330.4 257.9L3596.5 604.0M313.9 258.3L3577.0 610.4M297.2 258.7L3557.1 617.1M280.5 259.2L3536.5 623.9M263.6 259.6L3515.4 631.0M246.6 260.1L3493.6 638.2M229.5 260.5L3471.2 645.7M212.2 260.9L3448.2 653.4M194.9 261.4L3424.4 661.3M177.4 261.8L3399.8 669.4M159.8 262.3L3374.5 677.9M142.0 262.7L3348.4 686.6M124.1 263.2L3321.4 695.6M106.1 263.7L3293.6 704.9M88.0 264.1L3264.7 714.5M69.7 264.6L3234.9 724.4M51.3 265.1L3204.1 734.7M32.7 265.6L3172.1 745.3M14.0 266.0L3139.0 756.4M-4.8 266.5L3104.6 767.8M-23.8 267.0L3069.0 779.7M-42.9 267.5L3032.0 792.0M-62.2 268.0L2993.5 804.8M-81.6 268.5L2953.5 818.1M-101.2 269.0L2911.9 832.0M-120.9 269.5L2868.6 846.4M-140.8 270.0L2823.4 861.5M-160.8 270.5L2776.2 877.2M-181.0 271.1L2726.9 893.6M-201.4 271.6L2675.4 910.8M-221.9 272.1L2621.6 928.7M-242.6 272.7L2565.1 947.5M-263.4 273.2L2505.9 967.3M-284.4 273.7L2443.8 988.0M-305.6 274.3L2378.5 1009.7M-326.9 274.8L2309.7 1032.6M-348.4 275.4L2237.2 1056.8M-370.1 275.9L2160.7 1082.2M-392.0 276.5L2079.9 1109.2M-414.0 277.1L1994.3 1137.7M-436.2 277.6L1903.5 1167.9M-458.6 278.2L1807.1 1200.1M-481.2 278.8L1704.4 1234.3M-504.0 279.4L1595.0 1270.7M-527.0 280.0L1478.0 1309.7M-550.1 280.6L1352.6 1351.5M-573.5 281.2L1218.0 1396.3M-597.0 281.8L1073.1 1444.6M-620.8 282.4L916.6 1496.7M-644.8 283.0L747.1 1553.2M-668.9 283.6L562.9 1614.5M-693.3 284.3L362.1 1681.5M-717.9 284.9L142.1 1754.7M-742.7 285.5L-99.8 1835.3M-767.7 286.2L-367.0 1924.4M-792.9 286.8L-663.8 2023.2M-818.4 287.5L-995.4 2133.7M-844.0 288.1L-1368.3 2257.9M-869.9 288.8L-1790.7 2398.6M-896.1 289.5L-2273.1 2559.3M-922.5 290.2L-2829.3 2744.7M-949.1 290.9L-3477.7 2960.7" stroke="#a0a0a0" stroke-width="0.8" stroke-opacity="0.8" fill="none"/>
 </g>
 <polyline points="0,350.5 400,357 800,363 900,365 925,368.4" fill="none" stroke="#6a6a6a" stroke-width="1.2"/>
 <line x1="0" y1="456.8" x2="925" y2="844.3" stroke="#f06a6a" stroke-width="1.2"/>
 <line x1="0" y1="831.3" x2="925" y2="701.4" stroke="#5fe35f" stroke-width="1.2"/>
 <polygon points="644.8,640 760,634 816,649.7 848.1,661.6 787.5,696.1 644.8,692.5" fill="#cbc8bf"/>
 <polygon points="787.5,696.1 848.1,661.6 842.2,742.5 781.5,784" fill="url(#rightg)"/>
 <polygon points="644.8,692.5 787.5,696.1 781.5,784 644.8,781.8" fill="url(#frontg)"/>
 <!-- column -->
 <clipPath id="colclip"><path d="M500,0 H900 V639.5 L773.8,639.5 L773.8,640.3 L773.6,641.1 L773.4,641.8 L773.0,642.6 L772.6,643.3 L772.0,644.0 L771.4,644.8 L770.6,645.4 L769.8,646.1 L768.9,646.8 L767.8,647.4 L766.7,648.1 L765.5,648.7 L764.2,649.3 L762.8,649.9 L761.3,650.4 L759.7,651.0 L758.0,651.5 L756.3,652.0 L754.4,652.5 L752.5,653.0 L750.5,653.4 L748.4,653.8 L746.3,654.2 L744.0,654.6 L741.7,655.0 L739.3,655.3 L736.9,655.6 L734.4,655.9 L731.8,656.1 L729.1,656.4 L726.4,656.6 L723.7,656.8 L720.8,657.0 L718.0,657.1 L715.0,657.2 L712.1,657.3 L709.1,657.4 L706.0,657.4 L702.9,657.4 L699.8,657.4 L696.6,657.4 L693.4,657.3 L690.1,657.2 L686.9,657.1 L683.6,657.0 L680.3,656.8 L677.0,656.6 L673.6,656.4 L670.3,656.2 L666.9,655.9 L663.5,655.7 L660.2,655.4 L656.8,655.0 L653.4,654.7 L650.1,654.3 L646.7,653.9 L643.4,653.5 L640.1,653.1 L500,653.1 Z"/></clipPath>
 <g clip-path="url(#colclip)">
  <polygon points="616.70,47 619.81,47 585.06,665 582.09,665" fill="#c9c9c3"/>
  <polygon points="619.21,47 622.32,47 587.42,665 584.46,665" fill="#c8c8c1"/>
  <polygon points="621.72,47 624.83,47 589.79,665 586.82,665" fill="#c7c6bf"/>
  <polygon points="624.23,47 627.34,47 592.15,665 589.19,665" fill="#c6c5be"/>
  <polygon points="626.74,47 629.84,47 594.52,665 591.55,665" fill="#c5c4bd"/>
  <polygon points="629.24,47 632.35,47 596.88,665 593.92,665" fill="#c5c4bc"/>
  <polygon points="631.75,47 634.86,47 599.25,665 596.28,665" fill="#c4c3bb"/>
  <polygon points="634.26,47 637.37,47 601.61,665 598.65,665" fill="#c4c2bb"/>
  <polygon points="636.77,47 639.88,47 603.98,665 601.01,665" fill="#c4c2ba"/>
  <polygon points="639.28,47 642.39,47 606.34,665 603.38,665" fill="#c3c1b9"/>
  <polygon points="641.79,47 644.90,47 608.71,665 605.74,665" fill="#c3c1b8"/>
  <polygon points="644.30,47 647.41,47 611.07,665 608.11,665" fill="#c3c0b8"/>
  <polygon points="646.81,47 649.91,47 613.44,665 610.47,665" fill="#c2c0b7"/>
  <polygon points="649.31,47 652.42,47 615.80,665 612.84,665" fill="#c2c0b7"/>
  <polygon points="651.82,47 654.93,47 618.17,665 615.20,665" fill="#c2bfb6"/>
  <polygon points="654.33,47 657.44,47 620.53,665 617.57,665" fill="#c2bfb6"/>
  <polygon points="656.84,47 659.95,47 622.90,665 619.93,665" fill="#c2bfb5"/>
  <polygon points="659.35,47 662.46,47 625.26,665 622.30,665" fill="#c1beb5"/>
  <polygon points="661.86,47 664.97,47 627.63,665 624.66,665" fill="#c1beb4"/>
  <polygon points="664.37,47 667.48,47 629.99,665 627.03,665" fill="#c1beb4"/>
  <polygon points="666.88,47 669.98,47 632.36,665 629.39,665" fill="#c1bdb3"/>
  <polygon points="669.38,47 672.49,47 634.72,665 631.76,665" fill="#c1bdb2"/>
  <polygon points="671.89,47 675.00,47 637.09,665 634.12,665" fill="#c0bdb2"/>
  <polygon points="674.40,47 677.51,47 639.45,665 636.49,665" fill="#c0bcb1"/>
  <polygon points="676.91,47 680.02,47 641.82,665 638.85,665" fill="#c0bcb1"/>
  <polygon points="679.42,47 682.53,47 644.18,665 641.22,665" fill="#c0bcb1"/>
  <polygon points="681.93,47 685.04,47 646.55,665 643.58,665" fill="#c0bcb2"/>
  <polygon points="684.44,47 687.55,47 648.91,665 645.95,665" fill="#c1bdb2"/>
  <polygon points="686.95,47 690.05,47 651.28,665 648.31,665" fill="#c1bdb2"/>
  <polygon points="689.45,47 692.56,47 653.64,665 650.68,665" fill="#c1bdb2"/>
  <polygon points="691.96,47 695.07,47 656.01,665 653.04,665" fill="#c1bdb3"/>
  <polygon points="694.47,47 697.58,47 658.37,665 655.41,665" fill="#c1bdb3"/>
  <polygon points="696.98,47 700.09,47 660.74,665 657.77,665" fill="#c1bdb3"/>
  <polygon points="699.49,47 702.60,47 663.10,665 660.14,665" fill="#c2beb3"/>
  <polygon points="702.00,47 705.11,47 665.47,665 662.50,665" fill="#c2beb4"/>
  <polygon points="704.51,47 707.62,47 667.83,665 664.87,665" fill="#c2beb4"/>
  <polygon points="707.01,47 710.12,47 670.20,665 667.23,665" fill="#c2bfb5"/>
  <polygon points="709.52,47 712.63,47 672.56,665 669.60,665" fill="#c4c0b6"/>
  <polygon points="712.03,47 715.14,47 674.93,665 671.96,665" fill="#c4c1b8"/>
  <polygon points="714.54,47 717.65,47 677.29,665 674.33,665" fill="#c6c2b9"/>
  <polygon points="717.05,47 720.16,47 679.66,665 676.69,665" fill="#c6c4bb"/>
  <polygon points="719.56,47 722.67,47 682.02,665 679.06,665" fill="#c8c5bc"/>
  <polygon points="722.07,47 725.18,47 684.39,665 681.42,665" fill="#c8c6be"/>
  <polygon points="724.58,47 727.69,47 686.75,665 683.79,665" fill="#cac7bf"/>
  <polygon points="727.09,47 730.19,47 689.12,665 686.15,665" fill="#cac8c1"/>
  <polygon points="729.59,47 732.70,47 691.48,665 688.52,665" fill="#cbc9c2"/>
  <polygon points="732.10,47 735.21,47 693.85,665 690.88,665" fill="#cccac3"/>
  <polygon points="734.61,47 737.72,47 696.22,665 693.25,665" fill="#cdcbc4"/>
  <polygon points="737.12,47 740.23,47 698.58,665 695.62,665" fill="#ceccc5"/>
  <polygon points="739.63,47 742.74,47 700.95,665 697.98,665" fill="#cfcdc6"/>
  <polygon points="742.14,47 745.25,47 703.31,665 700.35,665" fill="#cfcdc7"/>
  <polygon points="744.65,47 747.75,47 705.68,665 702.71,665" fill="#cfcdc7"/>
  <polygon points="747.15,47 750.26,47 708.04,665 705.08,665" fill="#ccccc6"/>
  <polygon points="749.66,47 752.77,47 710.41,665 707.44,665" fill="#c9cac4"/>
  <polygon points="752.17,47 755.28,47 712.77,665 709.81,665" fill="#c4c6c0"/>
  <polygon points="754.68,47 757.79,47 715.14,665 712.17,665" fill="#bdbeb8"/>
  <polygon points="757.19,47 760.30,47 717.50,665 714.54,665" fill="#b9bbb5"/>
  <polygon points="759.70,47 762.81,47 719.87,665 716.90,665" fill="#b9bbb5"/>
  <polygon points="762.21,47 765.32,47 722.23,665 719.27,665" fill="#b9bcb6"/>
  <polygon points="764.72,47 767.83,47 724.60,665 721.63,665" fill="#b9bcb6"/>
  <polygon points="767.23,47 770.33,47 726.96,665 724.00,665" fill="#b9bcb6"/>
  <polygon points="769.73,47 772.84,47 729.33,665 726.36,665" fill="#babcb6"/>
  <polygon points="772.24,47 775.35,47 731.69,665 728.73,665" fill="#babcb6"/>
  <polygon points="774.75,47 777.86,47 734.06,665 731.09,665" fill="#babdb7"/>
  <polygon points="777.26,47 780.37,47 736.42,665 733.46,665" fill="#babdb7"/>
  <polygon points="779.77,47 782.88,47 738.79,665 735.82,665" fill="#babdb7"/>
  <polygon points="782.28,47 785.39,47 741.15,665 738.19,665" fill="#bbbeb8"/>
  <polygon points="784.79,47 787.89,47 743.52,665 740.55,665" fill="#bcbfb9"/>
  <polygon points="787.29,47 790.40,47 745.88,665 742.92,665" fill="#bdc0ba"/>
  <polygon points="789.80,47 792.91,47 748.25,665 745.28,665" fill="#bec1bb"/>
  <polygon points="792.31,47 795.42,47 750.61,665 747.65,665" fill="#bec1bc"/>
  <polygon points="794.82,47 797.93,47 752.98,665 750.01,665" fill="#bfc2bd"/>
  <polygon points="797.33,47 800.44,47 755.34,665 752.38,665" fill="#c0c3be"/>
  <polygon points="799.84,47 802.95,47 757.71,665 754.74,665" fill="#c1c4bf"/>
  <polygon points="802.35,47 805.46,47 760.07,665 757.11,665" fill="#c2c5c0"/>
  <polygon points="804.86,47 807.97,47 762.44,665 759.47,665" fill="#c5c8c3"/>
  <polygon points="807.37,47 810.47,47 764.80,665 761.84,665" fill="#c7cbc6"/>
  <polygon points="809.87,47 812.98,47 767.17,665 764.20,665" fill="#cacec9"/>
  <polygon points="812.38,47 815.49,47 769.53,665 766.57,665" fill="#ccd0cb"/>
  <polygon points="814.89,47 817.40,47 771.30,665 768.93,665" fill="#d2d5d0"/>
 </g>
 <path d="M616.1,47 L581.8,660" stroke="#111" stroke-width="1.15" stroke-dasharray="8.3,7.4" stroke-dashoffset="9.7" fill="none"/>
 <path d="M817.6,47 L773.2,642.6" stroke="#111" stroke-width="1.15" stroke-dasharray="8,5.2" stroke-dashoffset="3.4" fill="none"/>
 <path d="M774.2,636 Q785,642 787.5,657.5 L788.0,658.2 L788.4,658.8 L788.8,659.5 L788.9,660.1 L789.0,660.7 L789.0,661.4 L788.8,662.0 L788.6,662.7 L788.2,663.3 L787.7,663.9 L787.1,664.6 L786.4,665.2 L785.6,665.8 L784.6,666.4 L783.6,667.0 L782.4,667.6 L781.2,668.2 L779.8,668.8 L778.3,669.3 L776.8,669.9 L775.1,670.4 L773.3,670.9 L771.5,671.5 L769.5,672.0 L767.5,672.4 L765.4,672.9 L763.2,673.4 L760.9,673.8 L758.5,674.2 L756.0,674.6 L753.5,675.0 L750.9,675.4 L748.3,675.7 L745.6,676.0 L742.8,676.3 L739.9,676.6 L737.0,676.9 L734.1,677.1 L731.1,677.4 L728.1,677.6 L725.0,677.7 L721.9,677.9 L718.8,678.0 L715.7,678.1 L712.5,678.2 L709.3,678.3 L706.1,678.3 L702.9,678.4 L699.6,678.4 L696.4,678.3 L693.2,678.3 L690.0,678.2 L686.8,678.1 L683.6,678.0 L680.4,677.9 L677.2,677.7 L674.1,677.5 L671.0,677.3 L668.0,677.1 L664.9,676.8 L661.9,676.6 L659.0,676.3 L656.1,676.0 L653.3,675.7 L650.5,675.3 L647.8,674.9 L645.1,674.6 L642.5,674.2 L640.0,673.7 L640.1,653.1 L643.4,653.5 L646.7,653.9 L650.1,654.3 L653.4,654.7 L656.8,655.0 L660.2,655.4 L663.5,655.7 L666.9,655.9 L670.3,656.2 L673.6,656.4 L677.0,656.6 L680.3,656.8 L683.6,657.0 L686.9,657.1 L690.1,657.2 L693.4,657.3 L696.6,657.4 L699.8,657.4 L702.9,657.4 L706.0,657.4 L709.1,657.4 L712.1,657.3 L715.0,657.2 L718.0,657.1 L720.8,657.0 L723.7,656.8 L726.4,656.6 L729.1,656.4 L731.8,656.1 L734.4,655.9 L736.9,655.6 L739.3,655.3 L741.7,655.0 L744.0,654.6 L746.3,654.2 L748.4,653.8 L750.5,653.4 L752.5,653.0 L754.4,652.5 L756.3,652.0 L758.0,651.5 L759.7,651.0 L761.3,650.4 L762.8,649.9 L764.2,649.3 L765.5,648.7 L766.7,648.1 L767.8,647.4 L768.9,646.8 L769.8,646.1 L770.6,645.4 L771.4,644.8 L772.0,644.0 L772.6,643.3 L773.0,642.6 L773.4,641.8 L773.6,641.1 L773.8,640.3 L773.8,639.5 Z" fill="url(#filg)"/>
 <ellipse cx="662" cy="663" rx="16" ry="3.2" fill="#ffffff" opacity="0.75" filter="url(#blur1)"/>
 <path d="M644.8,692.5 L787.5,696.1 L848.1,661.6 L816,649.7" stroke="#111" stroke-width="1.3" fill="none"/>
 <path d="M787.5,696.1 L781.5,784 L644.8,781.8 M781.5,784 L842.2,742.5 L848.1,661.6" stroke="#111" stroke-width="1.5" fill="none"/>
 <path d="M644.8,699.7 L735.2,701.4 L842.2,742.5" stroke="#4a4a4a" stroke-width="0.9" fill="none"/>
 <path d="M773.8,639.5 L773.8,640.3 L773.6,641.1 L773.4,641.8 L773.0,642.6 L772.6,643.3 L772.0,644.0 L771.4,644.8 L770.6,645.4 L769.8,646.1 L768.9,646.8 L767.8,647.4 L766.7,648.1 L765.5,648.7 L764.2,649.3 L762.8,649.9 L761.3,650.4 L759.7,651.0 L758.0,651.5 L756.3,652.0 L754.4,652.5 L752.5,653.0 L750.5,653.4 L748.4,653.8 L746.3,654.2 L744.0,654.6 L741.7,655.0 L739.3,655.3 L736.9,655.6 L734.4,655.9 L731.8,656.1 L729.1,656.4 L726.4,656.6 L723.7,656.8 L720.8,657.0 L718.0,657.1 L715.0,657.2 L712.1,657.3 L709.1,657.4 L706.0,657.4 L702.9,657.4 L699.8,657.4 L696.6,657.4 L693.4,657.3 L690.1,657.2 L686.9,657.1 L683.6,657.0 L680.3,656.8 L677.0,656.6 L673.6,656.4 L670.3,656.2 L666.9,655.9 L663.5,655.7 L660.2,655.4 L656.8,655.0 L653.4,654.7 L650.1,654.3 L646.7,653.9 L643.4,653.5 L640.1,653.1" stroke="#111" stroke-width="1.2" fill="none"/>
 <path d="M774.2,636 Q785,642 787.5,657.5 L788.0,658.2 L788.4,658.8 L788.8,659.5 L788.9,660.1 L789.0,660.7 L789.0,661.4 L788.8,662.0 L788.6,662.7 L788.2,663.3 L787.7,663.9 L787.1,664.6 L786.4,665.2 L785.6,665.8 L784.6,666.4 L783.6,667.0 L782.4,667.6 L781.2,668.2 L779.8,668.8 L778.3,669.3 L776.8,669.9 L775.1,670.4 L773.3,670.9 L771.5,671.5 L769.5,672.0 L767.5,672.4 L765.4,672.9 L763.2,673.4 L760.9,673.8 L758.5,674.2 L756.0,674.6 L753.5,675.0 L750.9,675.4 L748.3,675.7 L745.6,676.0 L742.8,676.3 L739.9,676.6 L737.0,676.9 L734.1,677.1 L731.1,677.4 L728.1,677.6 L725.0,677.7 L721.9,677.9 L718.8,678.0 L715.7,678.1 L712.5,678.2 L709.3,678.3 L706.1,678.3 L702.9,678.4 L699.6,678.4 L696.4,678.3 L693.2,678.3 L690.0,678.2 L686.8,678.1 L683.6,678.0 L680.4,677.9 L677.2,677.7 L674.1,677.5 L671.0,677.3 L668.0,677.1 L664.9,676.8 L661.9,676.6 L659.0,676.3 L656.1,676.0 L653.3,675.7 L650.5,675.3 L647.8,674.9 L645.1,674.6 L642.5,674.2 L640.0,673.7" stroke="#111" stroke-width="1.1" fill="none"/>
 <path d="M807.0,645.5 L808.8,646.6 L810.5,647.6 L812.1,648.7 L813.5,649.7 L814.9,650.8 L816.1,651.8 L817.2,652.8 L818.2,653.9 L819.1,654.9 L819.9,655.9 L820.6,657.0 L821.1,658.0 L821.6,659.0 L821.9,660.0 L822.1,661.0 L822.1,662.0 L822.1,662.9 L821.9,663.9 L821.7,664.8 L821.3,665.8 L820.8,666.7 L820.1,667.6 L819.4,668.5 L818.5,669.4 L817.6,670.3 L816.5,671.1 L815.3,671.9 L813.9,672.7 L812.5,673.5 L811.0,674.3 L809.3,675.1 L807.6,675.8 L805.7,676.5 L803.7,677.2 L801.7,677.9 L799.5,678.6 L797.2,679.2 L794.8,679.8 L792.3,680.4 L789.8,681.0 L787.1,681.5 L784.3,682.0 L781.5,682.5 L778.6,683.0 L775.5,683.4 L772.4,683.8 L769.2,684.2 L766.0,684.6 L762.6,684.9 L759.2,685.2 L755.7,685.5 L752.1,685.7 L748.5,686.0 L744.8,686.2 L741.1,686.3 L737.3,686.5 L733.4,686.6 L729.5,686.7 L725.5,686.7 L721.5,686.8 L717.4,686.8 L713.3,686.7 L709.1,686.7 L705.0,686.6 L700.7,686.5 L696.5,686.3 L692.2,686.2 L687.9,686.0 L683.6,685.8 L679.3,685.5 L674.9,685.2 L670.6,684.9 L666.2,684.6 L661.9,684.2 L657.5,683.8 L653.1,683.4 L648.7,683.0 L644.4,682.5 L640.0,682.0" stroke="#111" stroke-width="1.1" fill="none"/>
 <path d="M818.5,668.6 L818.4,669.4 L818.3,670.1 L818.0,670.9 L817.7,671.6 L817.2,672.4 L816.7,673.1 L816.0,673.8 L815.3,674.5 L814.5,675.2 L813.5,675.9 L812.5,676.6 L811.3,677.2 L810.1,677.9 L808.8,678.5 L807.4,679.2 L805.9,679.8 L804.3,680.4 L802.6,681.0 L800.8,681.6 L799.0,682.2 L797.0,682.7 L795.0,683.2 L792.9,683.8 L790.7,684.3 L788.4,684.8 L786.1,685.2 L783.6,685.7 L781.1,686.1 L778.5,686.6 L775.9,687.0 L773.2,687.4 L770.4,687.7 L767.5,688.1 L764.6,688.4 L761.6,688.7 L758.6,689.0 L755.5,689.3 L752.3,689.6 L749.1,689.8 L745.8,690.0 L742.5,690.2 L739.2,690.4 L735.8,690.6 L732.3,690.7 L728.9,690.8 L725.3,690.9 L721.8,691.0 L718.2,691.0 L714.6,691.1 L710.9,691.1 L707.3,691.1 L703.6,691.1 L699.9,691.0 L696.2,690.9 L692.4,690.9 L688.7,690.7 L684.9,690.6 L681.2,690.5 L677.4,690.3 L673.6,690.1 L669.8,689.9 L666.1,689.7 L662.3,689.4 L658.6,689.1 L654.8,688.8 L651.1,688.5 L647.4,688.2 L643.7,687.9 L640.1,687.5" stroke="#222" stroke-width="1" fill="none"/>
 <path d="M644.8,742.5 L666,738" stroke="#333" stroke-width="1" fill="none"/>
 <circle cx="669.7" cy="737.3" r="4.2" fill="#6e6a7c" stroke="#57545f" stroke-width="1.2"/>
 <circle cx="669.7" cy="737.3" r="1.3" fill="#3a3844"/>
</svg>
<!-- toolbar -->
<div class="abs" style="left:0;top:0;width:925px;height:43px;background:#f1f1f1"></div>
<div class="abs" style="left:0;top:43px;width:925px;height:1px;background:#cbcbcb"></div>
<div class="abs" style="left:0;top:44px;width:925px;height:3px;background:#f1f1f1"></div>
<div class="abs" style="left:0;top:0;width:2px;height:27px;border-left:1px solid #c8c8c8;border-bottom:1px solid #c8c8c8;border-radius:0 0 0 3px"></div>
<svg class="abs" style="left:0;top:0" width="925" height="20" viewBox="0 0 925 20">
 <!-- sketch -->
 <path d="M22.5,0 V8" stroke="#555" stroke-width="1" stroke-dasharray="2,1.5"/>
 <rect x="21" y="9" width="3" height="3" fill="#555"/>
 <path d="M26,10.5 H44" stroke="#555" stroke-width="1"/>
 <path d="M30,0 V3 H33 L40,0" stroke="#555" stroke-width="1.6" fill="none"/>
 <path d="M52.5,0 V14 M44,6 H61" stroke="#22a845" stroke-width="4"/>
 <!-- extrude -->
 <path d="M76,0 H100 V7 L97,9 H76 Z" fill="#64aee5"/>
 <path d="M96,0 H100 V7 L97,9 Z" fill="#3f8fd0"/>
 <path d="M76,10 H97 L105,4 V10 L99,14 H76 Z" fill="#b5b5b5"/>
 <path d="M110.5,0 V7" stroke="#333" stroke-width="1"/>
 <!-- revolve -->
 <path d="M129,0 H160 V8 Q145,3 136,11 L129,3 Z" fill="#64aee5"/>
 <path d="M129,0 H136 V11 L129,3 Z" fill="#3f8fd0"/>
 <path d="M161,0 L169,0 V5 L161,11 Z" fill="#f3f3f3" stroke="#666" stroke-width="1"/>
 <!-- hole -->
 <path d="M183.5,0 V14.5 H215 L221,9 V0" fill="#d6d6d6" stroke="#666" stroke-width="1"/>
 <path d="M215,0 V14.5 L221,9 V0Z" fill="#bdbdbd"/>
 <circle cx="200" cy="0" r="9" fill="#64aee5" stroke="#fff" stroke-width="1.2"/>
 <circle cx="200" cy="0" r="10.3" fill="none" stroke="#666" stroke-width="1"/>
 <!-- pattern -->
 <rect x="236.5" y="3.5" width="8" height="8" fill="#64aee5" stroke="#4a98d8" stroke-width="1"/>
 <rect x="262.5" y="3.5" width="8" height="8" fill="#64aee5" stroke="#4a98d8" stroke-width="1"/>
 <path d="M245,7.5 H262 M240.5,0 V3" stroke="#555" stroke-width="1"/>
 <!-- form -->
 <path d="M290,0 H327 V7 L321,14 H297 Q290,14 290,8 Z" fill="#9f7ee0" stroke="#7b55c9" stroke-width="1"/>
 <path d="M293,0 H316 V11 H298 Q293,11 293,7Z" fill="#ae8ae8"/>
 <path d="M304,0 V11 M293,4 H316" stroke="#8f6ad4" stroke-width="0.8"/>
 <path d="M316,0 H326 V7 L320,13 H316 Z" fill="#8b63d0"/>
 <!-- pin -->
 <path d="M358,0 H367 Q370,6 368,10 A6,6 0 1 1 357,10 Q355,6 358,0Z" fill="#4b9ad6"/>
 <circle cx="362.5" cy="8" r="4.8" fill="#f1f1f1" stroke="#666" stroke-width="1.3"/>
 <circle cx="362.5" cy="8" r="1.5" fill="#666"/>
 <!-- modify -->
 <path d="M412.5,0 V14.5 H420" stroke="#777" stroke-width="1" fill="#ddd"/>
 <rect x="413" y="0" width="8" height="14" fill="#ddd"/>
 <path d="M421,0 H433 V14 H421Z" fill="#64aee5"/>
 <path d="M433,0 H440 V8 L433,14Z" fill="#3f8fd0"/>
 <path d="M465.5,0 V14.5 H495 L505,6 V0" fill="#d6d6d6" stroke="#666" stroke-width="1"/>
 <path d="M495,0 V14.5 L505,6 V0Z" fill="#bdbdbd"/>
 <path d="M519.5,0 V14.5 H549 L558,6 V0" fill="#d6d6d6" stroke="#666" stroke-width="1"/>
 <path d="M549,0 V14.5 L558,6 V0Z" fill="#bdbdbd"/>
 <path d="M524,0 H545 V10 H524Z" fill="#8ccbf5" stroke="#fff" stroke-width="1"/>
 <path d="M524,0 H540 L528,9 H524Z" fill="#3f8fd0"/>
 <path d="M573,0 H600 L597,3 H595 V13 H573Z" fill="#64aee5"/>
 <path d="M595,3 H601 L595,9Z" fill="#3f8fd0"/>
 <path d="M589,1 H603 L595,4 Z" fill="#64aee5"/>
 <path d="M629.5,0 V12.5 H656 L664,5 V0" fill="#d6d6d6" stroke="#666" stroke-width="1"/>
 <path d="M656,0 V12.5 L664,5 V0Z" fill="#bdbdbd"/>
 <path d="M700,0 V9" stroke="#222" stroke-width="1.6"/>
 <path d="M694,7 H707 L700.5,14Z" fill="#222"/>
 <path d="M689,0.5 H690 M711,0.5 H712" stroke="#555" stroke-width="1"/>
 <!-- assemble -->
  <rect x="753" y="0" width="14" height="11" fill="#d8d8d8"/><path d="M752.8,0 V11.3 H766" stroke="#555" stroke-width="1" fill="none"/>
 <rect x="768.5" y="5.5" width="12" height="6" rx="3" transform="rotate(-42 774.5 8.5)" fill="none" stroke="#f1f1f1" stroke-width="4"/>
 <rect x="768.5" y="5.5" width="12" height="6" rx="3" transform="rotate(-42 774.5 8.5)" fill="none" stroke="#222" stroke-width="2"/>
 <rect x="774.5" y="0" width="12" height="6" rx="3" transform="rotate(-42 780.5 3)" fill="none" stroke="#222" stroke-width="2"/>
 <path d="M802.5,0 V14.5 H831 L836,10 V0" fill="#d6d6d6" stroke="#777" stroke-width="1"/>
 <path d="M817,0 V14.5" stroke="#888" stroke-width="1"/>
 <path d="M855.5,0 V11.5 H873" stroke="#777" stroke-width="1" fill="none"/>
 <path d="M874,0 V12" stroke="#e02020" stroke-width="1.3"/>
 <path d="M916.5,0 V12 M917,3 H925 M917,8.5 H925" stroke="#888" stroke-width="1"/>
</svg>
<div class="abs" style="left:11px;top:20px;width:380px;height:21px;background:#0696d7"></div>
<div class="abs" style="left:167px;top:23px;font-size:13.8px;color:#fff;line-height:16px">CREATE</div>
<svg class="abs" style="left:225px;top:27px" width="8" height="6"><polygon points="0,0.2 7,0.2 3.5,5.3" fill="#fff"/></svg>
<div class="abs" style="left:396px;top:0;width:1px;height:38px;background:#cfcfcf"></div>
<div class="abs" style="left:733px;top:0;width:1px;height:38px;background:#cfcfcf"></div>
<div class="tlabel" style="left:530.8px;top:23px;font-size:13.8px">MODIFY</div>
<svg class="abs" style="left:588px;top:27px" width="8" height="6"><polygon points="0,0.2 6.7,0.2 3.35,4.8" fill="#3c3c3c"/></svg>
<div class="tlabel" style="left:803px;top:23px;font-size:13.8px">ASSEMBLE</div>
<svg class="abs" style="left:881.3px;top:27px" width="8" height="6"><polygon points="0,0.2 6.7,0.2 3.35,4.8" fill="#3c3c3c"/></svg>

<div class="abs" style="left:215px;top:52px;width:14px;height:31px;background:#f1f1f1;border:1px solid #d2d2d2;border-radius:2px"></div>
<!-- left browser strip -->
<div class="abs" style="left:0;top:47px;width:11px;height:337px;background:#f3f3f3;overflow:hidden">
 <div class="abs" style="left:0;top:0;width:11px;height:5px;background:#f8f8f8"></div>
 <div class="abs" style="left:0;top:5px;width:11px;height:1px;background:#cdcdcd"></div>
 <div class="abs" style="left:0;top:34px;width:11px;height:2px;background:#cdcdcd"></div>
 <div class="abs" style="left:0;top:36px;width:11px;height:9px;background:#f8f8f8"></div>
 <div class="abs" style="left:0;top:45px;width:11px;height:17px;background:#8e8e8e"></div>
 <div class="abs" style="left:-3px;top:45px;font-size:14px;line-height:17px;color:#fff">pa</div>
 <div class="abs" style="left:0;top:65px;width:11px;height:2px;background:#dedede"></div>
 <div class="abs" style="left:-8px;top:77px;font-size:14px;line-height:16px;color:#3b3b3b">me</div>
 <div class="abs" style="left:-1px;top:107px;font-size:14px;line-height:16px;color:#3b3b3b">d</div>
 <div class="abs" style="left:-4px;top:137px;font-size:14px;line-height:16px;color:#3b3b3b">Or</div>
 <div class="abs" style="left:-4px;top:168px;font-size:14px;line-height:16px;color:#3b3b3b">Bo</div>
 <div class="abs" style="left:-5px;top:228px;font-size:14px;line-height:16px;color:#3b3b3b">Sk</div>
 <div class="abs" style="left:0;top:218px;width:11px;height:3px;background:#f9f9f9"></div>
 <div class="abs" style="left:0;top:246px;width:11px;height:3px;background:#f9f9f9"></div>
 <div class="abs" style="left:0;top:309px;width:11px;height:2px;background:#d5d5d5"></div>
</div>

<!-- bottom left bar -->
<div class="abs" style="left:0;top:793px;width:230px;height:29px;background:#f1f1f1"></div>
<div class="abs" style="left:0;top:822px;width:230px;height:2px;background:#c9c9c9"></div>
<svg class="abs" style="left:203px;top:802px" width="13" height="13" viewBox="0 0 13 13"><circle cx="6.5" cy="6.5" r="5.8" fill="#222"/><path d="M6.5,3.2 V9.8 M3.2,6.5 H9.8" stroke="#fff" stroke-width="1.3"/></svg>
<div class="abs" style="left:0;top:830px;width:925px;height:16px;background:#f1f1f1;border-top:1px solid #d8d8d8"></div>

<!-- nav bar -->
<div class="abs" style="left:663px;top:792px;width:262px;height:30px;background:#efefef"></div>
<svg class="abs" style="left:663px;top:792px" width="262" height="30" viewBox="663 792 262 30">
 <ellipse cx="678.5" cy="807.5" rx="4.6" ry="10.3" transform="rotate(-14 678.5 807.5)" fill="none" stroke="#555" stroke-width="1"/>
 <path d="M675.5,803.2 Q667,804.5 667.2,809 Q667.5,813 675.5,813.8" fill="none" stroke="#555" stroke-width="1"/>
 <path d="M680.5,800.5 Q686,802 686,806 Q686,810 680,812.5" fill="none" stroke="#555" stroke-width="1"/>
 <path d="M678.5,799.5 L681.5,800.2 L679.2,802.3Z M682,802.5 L684.6,803.6 L682.2,805.4Z" fill="#333"/>
 <path d="M675.8,810.5 H680.8" stroke="#555" stroke-width="1"/>
 <path d="M676.3,804.8 V808.6 M674.4,806.7 H678.2" stroke="#1a7fe0" stroke-width="1.2"/>
 <path d="M695,804 H701 L698,809Z" fill="#333"/>
 <rect x="709" y="802.5" width="18" height="12" fill="#e6e6e6" stroke="#555" stroke-width="1"/>
 <rect x="712" y="805.5" width="12" height="6" fill="#bbb" stroke="#555" stroke-width="0.8"/>
 <path d="M711,802 L713,799 H722 L726,802" fill="none" stroke="#555" stroke-width="1"/>
 <path d="M747,816.5 Q743,814 740.5,808.5 Q740,806.5 741.8,806.8 L744.5,809.5 V800.5 Q745.5,799 746.5,800.5 V806 V798 Q747.5,796.5 748.6,798 V806 V797.5 Q749.8,796 750.9,797.5 V806 V799 Q752,797.5 753.1,799 V806.5 L754.8,801.5 Q756,800.5 756.6,802 L755.2,810 Q754,814.5 751.5,816.5Z" fill="#fafafa" stroke="#444" stroke-width="0.9" stroke-linejoin="round"/>
 <circle cx="781" cy="803" r="6.5" fill="#e8f4f8" stroke="#444" stroke-width="1.2"/>
 <path d="M785.5,807.5 L791,813" stroke="#333" stroke-width="2.5"/>
 <path d="M786,798 H792 M789,795 V801" stroke="#444" stroke-width="1"/>
 <rect x="805.5" y="798.5" width="19" height="16" fill="none" stroke="#888" stroke-width="0.8" stroke-dasharray="2,1.5"/>
 <circle cx="813" cy="805" r="6" fill="#e8f4f8" stroke="#444" stroke-width="1.2"/>
 <path d="M817,809 L822,814" stroke="#333" stroke-width="2.5"/>
 <path d="M832,804 H838 L835,809Z" fill="#333"/>
 <rect x="847.5" y="798.5" width="18" height="13" fill="#8fb3e8" stroke="#444" stroke-width="1.2"/>
 <path d="M853,812 L851,815 H862 L860,812" fill="#ccc" stroke="#444" stroke-width="1"/>
 <path d="M870,804 H876 L873,809Z" fill="#333"/>
 <rect x="886.5" y="799.5" width="17" height="15" fill="#ddd" stroke="#555" stroke-width="1"/>
 <path d="M890.5,800 V814 M894.5,800 V814 M898.5,800 V814 M887,803.5 H903 M887,807.5 H903 M887,811 H903" stroke="#555" stroke-width="0.8"/>
 <path d="M909,804 H915 L912,809Z" fill="#333"/>
 <rect x="921" y="800" width="6" height="14" fill="#8fb3e8" stroke="#444" stroke-width="1"/>
</svg>

<div class="abs" style="left:11px;top:41px;width:209px;height:665px;background:#fff;border:1px solid #7a7a7a;box-shadow:0.5px 0.5px 0 0 #999;border-radius:0 3px 3px 3px"></div>
<div class="abs" style="left:17px;top:372px;width:197px;height:25px;background:#d9d9d9"></div>
<div class="abs" style="left:17px;top:397px;width:197px;height:2px;background:#6f6f6f"></div>
<div class="sep" style="top:145px"></div>
<div class="sep" style="top:346px"></div>
<div class="sep" style="top:548.5px"></div>
<div class="sep" style="top:600px"></div>
<div class="sep" style="top:651px"></div>
<div class="mi" style="top:49.05px">New Component</div>
<div class="mi" style="top:73.85px">Create Sketch</div>
<div class="mi" style="top:98.65px">Create Form</div>
<div class="mi" style="top:123.45px">Derive</div>
<div class="mi" style="top:149.55px">Automated Modeling</div>
<div class="mi" style="top:174.55px">Extrude</div>
<div class="mi" style="top:199.65px">Revolve</div>
<div class="mi" style="top:224.65px">Sweep</div>
<div class="mi" style="top:249.75px">Loft</div>
<div class="mi" style="top:274.65px">Rib</div>
<div class="mi" style="top:299.55px">Web</div>
<div class="mi" style="top:324.55px">Emboss</div>
<div class="mi" style="top:352.05px">Hole</div>
<div class="mi" style="top:377.15px">Thread</div>
<div class="mi" style="top:402.75px">Box</div>
<div class="mi" style="top:427.85px">Cylinder</div>
<div class="mi" style="top:452.75px">Sphere</div>
<div class="mi" style="top:477.65px">Torus</div>
<div class="mi" style="top:502.75px">Coil</div>
<div class="mi" style="top:527.55px">Pipe</div>
<div class="mi" style="top:553.65px">Pattern</div>
<div class="mi" style="top:578.85px">Mirror</div>
<div class="mi" style="top:604.75px">Thicken</div>
<div class="mi" style="top:629.65px">Boundary Fill</div>
<div class="mi" style="top:656.35px">Create Base Feature</div>
<div class="mi" style="top:681.75px">Create PCB</div>
<div class="mi" style="left:171.5px;top:174.55px">E</div>
<div class="mi" style="left:171.5px;top:352.05px">H</div>
<svg class="abs" style="left:0;top:0" width="230" height="710" viewBox="0 0 230 710">
 <!-- thread dots & submenu arrows -->
 <circle cx="200" cy="378.5" r="1.4" fill="#111"/><circle cx="200" cy="384.5" r="1.4" fill="#111"/><circle cx="200" cy="390.5" r="1.4" fill="#111"/>
 <path d="M201,555.5 L207,561.5 L201,567.5Z" fill="#222"/>
 <path d="M201,683.5 L207,689.5 L201,695.5Z" fill="#222"/>
 <!-- New Component -->
 <path d="M19,51 Q19,49.5 21,49.5 H28 V60 H19Z" fill="#5aa8e4"/>
 <path d="M19,51 H28 V53 H19Z" fill="#8cc6f0"/>
 <path d="M19,60 H26.5 V66.5 H19Z" fill="#d8d8d8" stroke="#999" stroke-width="0.6"/>
 <path d="M26.5,59 L28.5,57 H36.5 V64.5 L34.5,66.5 H26.5Z" fill="#e6e6e6" stroke="#777" stroke-width="0.9"/>
 <path d="M34.5,59 V66.5" stroke="#999" stroke-width="0.6"/>
 <path d="M33.2,46.6 L34.2,50.2 L37.6,48.6 L35.8,51.8 L39.2,53 L35.6,54 L37,57.4 L33.8,55.4 L32.4,58.6 L31.6,55.2 L28.2,56.6 L30.2,53.6 L27,52.2 L30.4,51.4 L29,48 L32.2,50Z" fill="#f5a30a"/>
 <!-- Create Sketch -->
 <rect x="19.5" y="72.5" width="17" height="17.5" fill="none" stroke="#777" stroke-width="0.9" stroke-dasharray="1.6,1.2"/>
 <rect x="19" y="72" width="2" height="2" fill="#555"/><rect x="35" y="72" width="2" height="2" fill="#555"/><rect x="19" y="89" width="2" height="2" fill="#555"/>
 <path d="M23.5,84.5 V77.5 H31.5 Q31.5,84 24,85" fill="none" stroke="#555" stroke-width="1"/>
 <path d="M34.5,83.5 V93 M30,88.5 H39.5" stroke="#1ea845" stroke-width="2.2"/>
 <!-- Create Form -->
 <path d="M22,98.5 H32 L36.5,103 V112 L33,116 H23 Q19,116 19,112 V102 Q19,98.5 22,98.5Z" fill="#a17fe0"/>
 <path d="M21,100 H32 V113 H21Z" fill="#b595ee" opacity="0.8"/>
 <path d="M26.5,100 V114 M20,107 H33" stroke="#8e68d6" stroke-width="0.7"/>
 <path d="M33,104 L36.5,103 V112 L33,116Z" fill="#8760d0"/>
 <path d="M33.2,96.6 L34.2,100.2 L37.6,98.6 L35.8,101.8 L39.2,103 L35.6,104 L37,107.4 L33.8,105.4 L32.4,108.6 L31.6,105.2 L28.2,106.6 L30.2,103.6 L27,102.2 L30.4,101.4 L29,98 L32.2,100Z" fill="#f5a30a"/>
 <!-- Derive -->
 <path d="M21,130 L26,124 H37.6 V136.5 L34,140.5 H21Z" fill="#e8e8e8" stroke="#666" stroke-width="0.9"/>
 <path d="M34,128 L37.6,124 V136.5 L34,140.5Z" fill="#c8c8c8"/>
 <path d="M21,130 H34 V140.5" fill="none" stroke="#999" stroke-width="0.6"/>
 <path d="M19.5,139 Q21,133 26,133 V130.5 L30.5,134.5 L26,138.5 V136 Q22,136 19.5,139Z" fill="#222"/>
 <!-- Automated Modeling -->
 <path d="M19.5,152.5 V149.5 H23" fill="none" stroke="#555" stroke-width="0.9"/>
 <path d="M21,152 L26.5,158 L27.5,163 M34,154 L28.5,158 L27.5,163 M26.5,158 H28.5" stroke="#4a97d6" stroke-width="2.6" fill="none" stroke-linejoin="round"/>
 <circle cx="36" cy="152.5" r="2.6" fill="#f5f5f5" stroke="#777" stroke-width="0.8"/>
 <circle cx="27.5" cy="165" r="3.2" fill="#ccc" stroke="#4a97d6" stroke-width="1.6"/>
 <!-- Extrude -->
 <path d="M19,176 L21,174 H34 V188 L32,190 H19Z" fill="#5aa8e4"/>
 <path d="M19,176 L21,174 H34 L32,176Z" fill="#8cc6f0"/>
 <path d="M32,176 L34,174 V188 L32,190Z" fill="#3f8fd0"/>
 <path d="M19,190 H32 L34,188 V191 L32,193.5 H19Z" fill="#b8b8b8"/>
 <path d="M36.5,190 V175" stroke="#333" stroke-width="1"/>
 <path d="M34.8,177.5 L36.5,173.5 L38.2,177.5Z" fill="#333"/>
 <!-- Revolve -->
 <path d="M20,202.8 Q28,198.5 37,202.7" fill="none" stroke="#333" stroke-width="0.9"/>
 <path d="M18.8,203 L21.8,200.6 L21.6,203.8Z" fill="#333"/>
 <path d="M19,206.5 Q28,201.5 38.4,206.8 L34.8,209.4 V215.8 Q28,212.5 22,216.5 L19,213.8Z" fill="#5aa8e4"/>
 <path d="M19,206.5 Q28,201.5 38.4,206.8 L34.8,209.4 Q28,206.5 21.2,209.5Z" fill="#8cc6f0"/>
 <path d="M34.8,209.3 L38.5,207.2 V212.3 L35.1,215.6Z" fill="#f4f4f4" stroke="#555" stroke-width="0.8"/>
 <!-- Sweep -->
 <path d="M19,228 Q19,224 23,224 H28 V228 L25,230 V235 L22,236 Q19,236 19,232Z" fill="#5aa8e4"/>
 <path d="M25,230 L29,227 H38 V239 L34,242 H25Z" fill="#5aa8e4"/>
 <path d="M34,231 L38,228 V239 L34,242Z" fill="#3f8fd0"/>
 <path d="M25,230 L29,227 H38 L34,230Z" fill="#8cc6f0"/>
 <rect x="25.5" y="233.5" width="8.5" height="9" fill="#eee" stroke="#777" stroke-width="0.9"/>
 <!-- Loft -->
 <path d="M19,249 H38 V260 L32,265 H25 L19,260Z" fill="#5aa8e4"/>
 <path d="M19,249 L28.5,258 L38,249Z" fill="#8cc6f0"/>
 <circle cx="28.5" cy="264" r="5.5" fill="#eee" stroke="#666" stroke-width="0.9"/>
 <!-- Rib -->
 <path d="M19,279 L22.5,275 V290 H39 L36,294 H19Z" fill="#cfcfcf" stroke="#999" stroke-width="0.6"/>
 <path d="M22.5,279.5 L34,290 H22.5Z" fill="#5aa8e4"/>
 <!-- Web -->
 <path d="M19,301.5 L21,300 H38 V317 L35.5,319.5 H19Z" fill="#d8d8d8" stroke="#666" stroke-width="0.8"/>
 <path d="M35.5,302 L38,300 V317 L35.5,319.5Z" fill="#bbb"/>
 <rect x="21" y="303.5" width="13" height="14" fill="#eee" stroke="#888" stroke-width="0.6"/>
 <path d="M27.5,304 V317 M21.5,310.5 H33.5" stroke="#4a97d6" stroke-width="3"/>
 <!-- Emboss -->
 <path d="M19,324.5 Q38,325 38.5,344 H19Z" fill="#efefef"/>
 <path d="M19,324.5 Q38,325 38.5,344" fill="none" stroke="#555" stroke-width="0.9"/>
 <path d="M19,335 Q27,335 27,344 H19Z" fill="#d6d6d6"/>
 <text x="27" y="339.5" font-family="Liberation Sans" font-weight="bold" font-size="15" fill="#4a9ee0" text-anchor="middle" transform="rotate(-38 27 334)">E</text>
 <!-- Hole -->
 <path d="M19,354 L23,350 H38.5 V366.5 L35,370 H19Z" fill="#d8d8d8" stroke="#555" stroke-width="0.9"/>
 <path d="M35,354 L38.5,350 V366.5 L35,370Z" fill="#bdbdbd"/>
 <circle cx="27.5" cy="360.5" r="5.3" fill="#fff" stroke="#444" stroke-width="0.9"/>
 <path d="M25,358 Q24,363 30,364 Q26,366 24,362 Q23,359 25,358Z" fill="#4a97d6" stroke="#4a97d6" stroke-width="1.5"/>
 <!-- Thread -->
 <rect x="21.5" y="375.5" width="14.5" height="19" fill="#f0f0f0" stroke="#666" stroke-width="0.9"/>
 <path d="M19,383 L38,378 M19,387.5 L38,382.5 M19,392 L38,387" stroke="#2a8ae0" stroke-width="1.3"/>
 <!-- Box -->
 <path d="M19,404 L23,400 H38 V415 L34,419 H19Z" fill="#5aa8e4"/>
 <path d="M19,404 L23,400 H38 L34,404Z" fill="#8cc6f0"/>
 <path d="M34,404 L38,400 V415 L34,419Z" fill="#3f8fd0"/>
 <!-- Cylinder -->
 <path d="M19,429.5 V442 Q28.5,447 38,442 V429.5Z" fill="#5aa8e4"/>
 <ellipse cx="28.5" cy="429.5" rx="9.5" ry="2.8" fill="#8cc6f0"/>
 <!-- Sphere -->
 <circle cx="28.5" cy="460.8" r="9.5" fill="#5aa8e4"/>
 <path d="M19,460.8 A9.5,9.5 0 0 1 38,460.8 Q28.5,466 19,460.8Z" fill="#8cc6f0"/>
 <!-- Torus -->
 <ellipse cx="28.5" cy="485.5" rx="9.5" ry="7" fill="#5aa8e4"/>
 <ellipse cx="28.5" cy="484.8" rx="8.5" ry="5.5" fill="#8cc6f0"/>
 <ellipse cx="28.5" cy="485.3" rx="3.8" ry="2.2" fill="#fff"/>
 <!-- Coil -->
 <path d="M35.5,503.5 L21.8,506.8 L35.5,510.3 L21.8,512.8 L35.5,516.3 L21.8,518.8" fill="none" stroke="#5aa8e4" stroke-width="2.3" stroke-linejoin="bevel"/>
 <path d="M21.8,506.8 L35.5,510.3 M21.8,512.8 L35.5,516.3" fill="none" stroke="#3f8fd0" stroke-width="2.3"/>
 <!-- Pipe -->
 <path d="M21.5,536.5 L34,531.2 A3.6,3.6 0 0 1 37,537.6 L24.5,542.8 Z" fill="#6fb6ec"/>
 <ellipse cx="23" cy="539.6" rx="3.2" ry="3.6" transform="rotate(-22 23 539.6)" fill="#5aa8e4" stroke="#4a97d6" stroke-width="0.8"/>
 <!-- Mirror -->
 <path d="M19.5,595.5 L27.5,578.5 V595.5Z" fill="#f0f0f0" stroke="#555" stroke-width="0.9"/>
 <path d="M28.5,578 L37.5,596 H28.5Z" fill="#5aa8e4"/>
 <!-- Thicken -->
 <path d="M19,612 L34,606 L38.5,609 V614 L24,621 L19,617Z" fill="#5aa8e4"/>
 <path d="M20,612 L31,605 L38,609 L26,616Z" fill="#f0f0f0" stroke="#666" stroke-width="0.8"/>
 <!-- Boundary Fill -->
 <rect x="26.5" y="629" width="12.5" height="11.5" fill="#e28f58"/>
 <circle cx="25" cy="640" r="7" fill="#e28f58"/>
 <path d="M26.5,633.5 A7,7 0 0 1 32,640 H26.5Z" fill="#5aa8e4"/>
 <!-- Create Base Feature -->
 <path d="M19,662 L23,657 H36 V670 L32,675 H19Z" fill="#dcdcdc" stroke="#666" stroke-width="0.8"/>
 <path d="M32,662 L36,657 V670 L32,675Z" fill="#c4c4c4"/>
 <path d="M19,662 H32 V675" fill="none" stroke="#999" stroke-width="0.6"/>
 <path d="M32.2,654.6 L33.2,658.2 L36.6,656.6 L34.8,659.8 L38.2,661 L34.6,662 L36,665.4 L32.8,663.4 L31.4,666.6 L30.6,663.2 L27.2,664.6 L29.2,661.6 L26,660.2 L29.4,659.4 L28,656 L31.2,658Z" fill="#f5a30a"/>
</svg>


<div class="abs" style="left:226px;top:377px;width:419px;height:473px;background:#505050;border-radius:14px"></div>
<svg class="abs" style="left:226px;top:377px" width="419" height="469" viewBox="226 377 419 469">
 <defs>
  <clipPath id="topell"><ellipse cx="429.2" cy="629.6" rx="90.8" ry="48.7"/></clipPath>
  <linearGradient id="topface" x1="0" y1="0" x2="1" y2="1">
   <stop offset="0" stop-color="#76726a"/><stop offset="1" stop-color="#6a675f"/>
  </linearGradient>
 </defs>
 <polygon points="291.4,660.4 367.6,707.4 367.6,795 299.5,746.4" fill="#5f5d57"/>
 <polygon points="367.6,707.4 494.1,707.4 489.2,795 367.6,795" fill="#46453f"/>
 <polygon points="494.1,707.4 568.7,660.4 560.6,746.4 489.2,795" fill="#5d5b55"/>
 <polygon points="291.4,660.4 304.3,597.2 378.9,562.1 481.1,562.1 555.7,597.2 568.7,660.4 494.1,707.4 367.6,707.4" fill="url(#topface)"/>
 <path d="M291.4,660.4 L304.3,597.2 L378.9,562.1 L481.1,562.1 L555.7,597.2 L568.7,660.4 L494.1,707.4 L367.6,707.4 Z M367.6,707.4 V795 M494.1,707.4 L489.2,795 M291.4,660.4 L299.5,746.4 L367.6,795 H489.2 L560.6,746.4 L568.7,660.4" fill="none" stroke="#3e3d39" stroke-width="0.8"/>
 <path d="M304.3,597.2 L291.4,660.4" stroke="#8a867c" stroke-width="0.6"/>
 <!-- cylinder front translucent -->
 <path d="M337.9,629.6 A90.8,48.7 0 0 0 520,629.6 L515.2,746.4 Q429.2,790 343.3,746.4 Z" fill="#5a82c8" fill-opacity="0.34"/>
 <path d="M337.9,629.6 L343.3,746.4 Q429.2,790 515.2,746.4 L520,629.6" fill="none" stroke="#b8bcc0" stroke-width="1" stroke-opacity="0.8"/>
 <!-- thread interior -->
 <ellipse cx="429.2" cy="629.6" rx="90.8" ry="48.7" fill="#2a5ab0"/>
 <g clip-path="url(#topell)">
  <ellipse cx="429.2" cy="627.0" rx="90.8" ry="48.7" fill="none" stroke="#4c8de8" stroke-width="3.6"/>
  <ellipse cx="429.2" cy="625.8" rx="90.8" ry="48.7" fill="none" stroke="#78aef2" stroke-width="0.9"/>
  <ellipse cx="429.2" cy="633.2" rx="90.8" ry="48.7" fill="none" stroke="#4c8de8" stroke-width="3.6"/>
  <ellipse cx="429.2" cy="632.0" rx="90.8" ry="48.7" fill="none" stroke="#78aef2" stroke-width="0.9"/>
  <ellipse cx="429.2" cy="639.4" rx="90.8" ry="48.7" fill="none" stroke="#4c8de8" stroke-width="3.6"/>
  <ellipse cx="429.2" cy="638.2" rx="90.8" ry="48.7" fill="none" stroke="#78aef2" stroke-width="0.9"/>
  <ellipse cx="429.2" cy="645.6" rx="90.8" ry="48.7" fill="none" stroke="#4c8de8" stroke-width="3.6"/>
  <ellipse cx="429.2" cy="644.4" rx="90.8" ry="48.7" fill="none" stroke="#78aef2" stroke-width="0.9"/>
  <ellipse cx="429.2" cy="651.8" rx="90.8" ry="48.7" fill="none" stroke="#4c8de8" stroke-width="3.6"/>
  <ellipse cx="429.2" cy="650.6" rx="90.8" ry="48.7" fill="none" stroke="#78aef2" stroke-width="0.9"/>
  <ellipse cx="429.2" cy="658.0" rx="90.8" ry="48.7" fill="none" stroke="#4c8de8" stroke-width="3.6"/>
  <ellipse cx="429.2" cy="656.8" rx="90.8" ry="48.7" fill="none" stroke="#78aef2" stroke-width="0.9"/>
  <ellipse cx="429.2" cy="664.2" rx="90.8" ry="48.7" fill="none" stroke="#4c8de8" stroke-width="3.6"/>
  <ellipse cx="429.2" cy="663.0" rx="90.8" ry="48.7" fill="none" stroke="#78aef2" stroke-width="0.9"/>
  <ellipse cx="429.2" cy="670.4" rx="90.8" ry="48.7" fill="none" stroke="#4c8de8" stroke-width="3.6"/>
  <ellipse cx="429.2" cy="669.2" rx="90.8" ry="48.7" fill="none" stroke="#78aef2" stroke-width="0.9"/>
  <ellipse cx="429.2" cy="676.6" rx="90.8" ry="48.7" fill="none" stroke="#4c8de8" stroke-width="3.6"/>
  <ellipse cx="429.2" cy="675.4" rx="90.8" ry="48.7" fill="none" stroke="#78aef2" stroke-width="0.9"/>
  <ellipse cx="429.2" cy="682.8" rx="90.8" ry="48.7" fill="none" stroke="#4c8de8" stroke-width="3.6"/>
  <ellipse cx="429.2" cy="681.6" rx="90.8" ry="48.7" fill="none" stroke="#78aef2" stroke-width="0.9"/>
  <ellipse cx="429.2" cy="689.0" rx="90.8" ry="48.7" fill="none" stroke="#4c8de8" stroke-width="3.6"/>
  <ellipse cx="429.2" cy="687.8" rx="90.8" ry="48.7" fill="none" stroke="#78aef2" stroke-width="0.9"/>
  <ellipse cx="429.2" cy="695.2" rx="90.8" ry="48.7" fill="none" stroke="#4c8de8" stroke-width="3.6"/>
  <ellipse cx="429.2" cy="694.0" rx="90.8" ry="48.7" fill="none" stroke="#78aef2" stroke-width="0.9"/>
  <ellipse cx="429.2" cy="701.4" rx="90.8" ry="48.7" fill="none" stroke="#4c8de8" stroke-width="3.6"/>
  <ellipse cx="429.2" cy="700.2" rx="90.8" ry="48.7" fill="none" stroke="#78aef2" stroke-width="0.9"/>
  <ellipse cx="429.2" cy="707.6" rx="90.8" ry="48.7" fill="none" stroke="#4c8de8" stroke-width="3.6"/>
  <ellipse cx="429.2" cy="706.4" rx="90.8" ry="48.7" fill="none" stroke="#78aef2" stroke-width="0.9"/>
  <ellipse cx="429.2" cy="713.8" rx="90.8" ry="48.7" fill="none" stroke="#4c8de8" stroke-width="3.6"/>
  <ellipse cx="429.2" cy="712.6" rx="90.8" ry="48.7" fill="none" stroke="#78aef2" stroke-width="0.9"/>
  <ellipse cx="429.2" cy="720.0" rx="90.8" ry="48.7" fill="none" stroke="#4c8de8" stroke-width="3.6"/>
  <ellipse cx="429.2" cy="718.8" rx="90.8" ry="48.7" fill="none" stroke="#78aef2" stroke-width="0.9"/>
  <ellipse cx="431" cy="672" rx="48" ry="8" fill="#4e4e4e" stroke="#9aa0a8" stroke-width="0.7"/>
 </g>
 <path d="M337.9,629.6 A90.8,48.7 0 0 1 520,629.6" fill="none" stroke="#c9c6bb" stroke-width="1.2"/>
 <path d="M337.9,629.6 A90.8,48.7 0 0 0 520,629.6" fill="none" stroke="#9aa3b0" stroke-width="0.8"/>
 <path d="M397,640 L420,627" stroke="#9cc0f0" stroke-width="0.6"/>
 <text x="388" y="641" font-family="Liberation Sans" font-size="5" fill="#9cc0f0">10.00</text>
 <path d="M350,672 L350.5,664.5 L353,667 L358,662 L360,664 L355,669 L357.5,671.5 Z" fill="#19a0e6" stroke="#fff" stroke-width="1.1" stroke-linejoin="round"/>
</svg>
<svg class="abs" style="left:226px;top:377px" width="419" height="469" viewBox="226 377 419 469">
 <text x="245" y="428.0" font-family="Liberation Sans" font-weight="bold" font-size="14.8" fill="#fff" textLength="321.0" lengthAdjust="spacingAndGlyphs">Add internal or external threads to cylindrical</text>
 <text x="245" y="448.0" font-family="Liberation Sans" font-weight="bold" font-size="14.8" fill="#fff" textLength="356.1" lengthAdjust="spacingAndGlyphs">geometry. Threads can be cosmetic or modeled on</text>
 <text x="245" y="468.0" font-family="Liberation Sans" font-weight="bold" font-size="14.8" fill="#fff" textLength="99.3" lengthAdjust="spacingAndGlyphs">the geometry.</text>
 <text x="245" y="508.0" font-family="Liberation Sans" font-weight="bold" font-size="14.8" fill="#fff" textLength="301.7" lengthAdjust="spacingAndGlyphs">Select a cylindrical face then set the thread</text>
 <text x="245" y="528.0" font-family="Liberation Sans" font-weight="bold" font-size="14.8" fill="#fff" textLength="99.3" lengthAdjust="spacingAndGlyphs">specifications.</text>
 <text x="245" y="842.6" font-family="Liberation Sans" font-weight="bold" font-size="14.8" fill="#fff" textLength="187.7" lengthAdjust="spacingAndGlyphs">Press Ctrl+/ for more help.</text>
</svg>
</body></html>
